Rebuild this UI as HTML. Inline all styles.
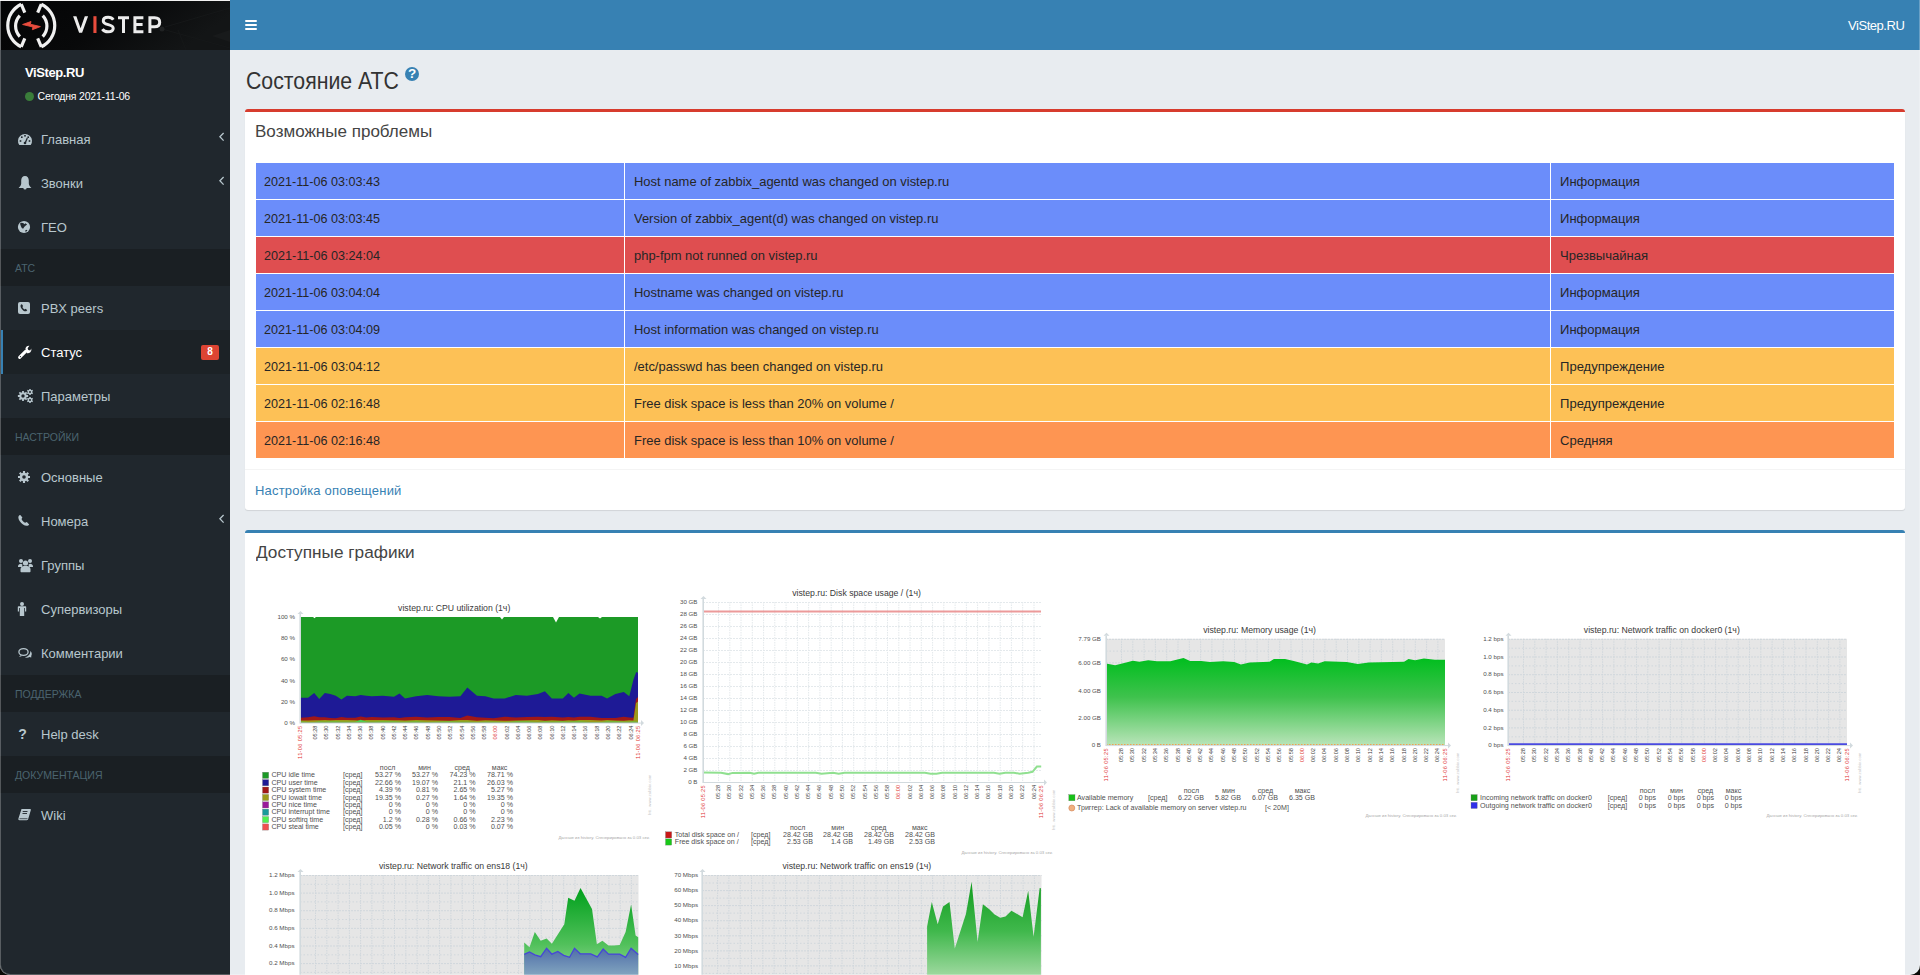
<!DOCTYPE html><html><head><meta charset="utf-8"><style>
*{box-sizing:border-box}
html,body{margin:0;padding:0}
body{width:1920px;height:975px;overflow:hidden;position:relative;background:#0b0b08;font-family:"Liberation Sans",sans-serif;color:#333}
.a{position:absolute;white-space:nowrap;line-height:1}
.mi{color:#b8c7ce;font-size:13px}
.hd{position:absolute;left:0;width:230px;height:37px;background:#1a1f23}
.hdt{color:#4b646f;font-size:10.5px;left:15px}
.row{position:absolute;height:36px}
.tt{font-size:12.6px;color:#262626}
</style></head><body>
<div class="a" style="left:0;top:0;width:1920px;height:975px;overflow:hidden;border-radius:0 0 10px 10px;background:#e8ecf0">
<div class="a" style="left:0;top:0;width:230px;height:975px;background:#20272d;"></div>
<div class="a" style="left:0;top:0;width:230px;height:1px;background:#f2f2f2"></div>
<div class="a" style="left:230px;top:0;width:1690px;height:50px;background:#3781b3"></div>
<svg class="a" style="left:0;top:1px" width="230" height="49" viewBox="0 1 230 49">
<defs><linearGradient id="lg" x1="0" y1="0" x2="1" y2="0.3">
<stop offset="0" stop-color="#030405"/><stop offset="0.55" stop-color="#08090a"/><stop offset="1" stop-color="#131516"/></linearGradient></defs>
<rect x="0" y="1" width="230" height="49" fill="url(#lg)"/>
<g stroke="#161819" stroke-width="1" fill="none"><path d="M162,29 L230,48 M165,27 L230,8 M178,30 L186,50"/></g><circle cx="162" cy="29" r="2.5" fill="#202223"/><path d="M212,36 L230,30 L230,42 Z" fill="#181a1b"/>
<rect x="0" y="1" width="1" height="49" fill="#3a3d40"/>
<g fill="none" stroke="#f0f0f0" stroke-width="3.2" stroke-linecap="butt">
<path d="M21.2,4.2 A23.6,23.6 0 0 0 21.2,46.8"/>
<path d="M21.2,4.2 L24.8,12.6"/>
<path d="M21.2,46.8 L24.8,38.4"/>
<path d="M41.3,4.2 A23.6,23.6 0 0 1 41.3,46.8"/>
<path d="M41.3,4.2 L37.7,12.6"/>
<path d="M41.3,46.8 L37.7,38.4"/>
<path d="M19.8,15.6 A15.2,15.2 0 0 0 19.8,36.6"/>
<path d="M42.7,15.6 A15.2,15.2 0 0 1 42.7,36.6"/>
</g>
<path d="M22.6,24.5 L31,21.5 L30.3,24.2 L40.4,26.6 L32.4,29.7 L32.9,27 Z" fill="#e84c3d" stroke="#e84c3d" stroke-width="0.9" stroke-linejoin="round"/>
<g fill="none" stroke="#ececec" stroke-width="3">

<path d="M113.3,19.8 C112.2,18.1 110.5,17.3 108.1,17.3 C105,17.3 103.3,18.9 103.3,20.9 C103.3,25.6 113.2,23.6 113.2,28.2 C113.2,30.5 111.2,31.8 108,31.8 C105.5,31.8 103.6,30.9 102.4,29.1"/>
<path d="M118,17.8 H129 M123.5,17.8 V33"/>
<path d="M143.4,17.8 H134.9 V31.7 H143.4 M134.9,24.6 H142.6"/>
<path d="M149.9,33 V17.8 H154.6 C158.1,17.8 159.7,19.8 159.7,22.3 C159.7,24.8 158.1,26.8 154.6,26.8 H149.9"/>
</g>
<rect x="93.4" y="16.2" width="3.1" height="16.8" fill="#e84c3d"/><path d="M73.1,16.3 L76.4,16.3 L80.6,28.2 L84.8,16.3 L88.1,16.3 L82.1,32.8 L79.1,32.8 Z" fill="#ececec"/>
</svg>
<div class="a" style="left:245px;top:20px;width:12px;height:2px;background:#fff;border-radius:1px"></div>
<div class="a" style="left:245px;top:24px;width:12px;height:2px;background:#fff;border-radius:1px"></div>
<div class="a" style="left:245px;top:28px;width:12px;height:2px;background:#fff;border-radius:1px"></div>
<div class="a" style="left:1848px;top:19px;font-size:13px;color:#fff;letter-spacing:-0.45px">ViStep.RU</div>
<div class="a" style="left:25px;top:66px;font-size:13px;font-weight:bold;color:#fff;letter-spacing:-0.4px">ViStep.RU</div>
<div class="a" style="left:25px;top:91.5px;width:9px;height:9px;border-radius:50%;background:#3a7d3a"></div>
<div class="a" style="left:37.5px;top:91.2px;font-size:10.5px;color:#fff;letter-spacing:-0.2px">Сегодня 2021-11-06</div>
<div class="a mi" style="left:41px;top:133px">Главная</div>
<svg class="a" style="left:218px;top:131.5px" width="8" height="10"><path d="M5.6,1 L1.9,4.8 L5.6,8.6" fill="none" stroke="#b8c7ce" stroke-width="1.3"/></svg>
<div class="a mi" style="left:41px;top:177px">Звонки</div>
<svg class="a" style="left:218px;top:175.5px" width="8" height="10"><path d="M5.6,1 L1.9,4.8 L5.6,8.6" fill="none" stroke="#b8c7ce" stroke-width="1.3"/></svg>
<div class="a mi" style="left:41px;top:221px">ГЕО</div>
<div class="hd" style="top:249px"></div>
<div class="a hdt" style="top:263px">АТС</div>
<div class="a mi" style="left:41px;top:302px">PBX peers</div>
<div class="a" style="left:0;top:330px;width:230px;height:44px;background:#1c2226"></div>
<div class="a" style="left:1px;top:330px;width:2px;height:44px;background:#3781b3"></div>
<div class="a mi" style="left:41px;top:346px;color:#fff">Статус</div>
<div class="a mi" style="left:41px;top:390px">Параметры</div>
<div class="hd" style="top:418px"></div>
<div class="a hdt" style="top:432px">НАСТРОЙКИ</div>
<div class="a mi" style="left:41px;top:471px">Основные</div>
<div class="a mi" style="left:41px;top:515px">Номера</div>
<svg class="a" style="left:218px;top:513.5px" width="8" height="10"><path d="M5.6,1 L1.9,4.8 L5.6,8.6" fill="none" stroke="#b8c7ce" stroke-width="1.3"/></svg>
<div class="a mi" style="left:41px;top:559px">Группы</div>
<div class="a mi" style="left:41px;top:603px">Супервизоры</div>
<div class="a mi" style="left:41px;top:647px">Комментарии</div>
<div class="hd" style="top:675px"></div>
<div class="a hdt" style="top:689px">ПОДДЕРЖКА</div>
<div class="a mi" style="left:41px;top:728px">Help desk</div>
<div class="hd" style="top:756px"></div>
<div class="a hdt" style="top:770px">ДОКУМЕНТАЦИЯ</div>
<div class="a mi" style="left:41px;top:809px">Wiki</div>
<div class="a" style="left:201px;top:345px;width:18px;height:15px;background:#dd4433;border-radius:2px"></div>
<div class="a" style="left:201px;top:347px;width:18px;text-align:center;font-size:10px;font-weight:bold;color:#fff">8</div>
<svg class="a" style="left:0;top:0" width="230" height="975" viewBox="0 0 230 975"><path d="M19.3,145 A7,7 0 1 1 30.7,145 Z" fill="#b8c7ce"/><rect x="19.7" y="140.2" width="1.6" height="1.6" fill="#20272d"/><rect x="21.0" y="136.39999999999998" width="1.6" height="1.6" fill="#20272d"/><rect x="24.2" y="135.0" width="1.6" height="1.6" fill="#20272d"/><rect x="27.4" y="136.39999999999998" width="1.6" height="1.6" fill="#20272d"/><rect x="28.7" y="140.2" width="1.6" height="1.6" fill="#20272d"/><path d="M25,143.5 L27.3,138" stroke="#20272d" stroke-width="1.3"/><circle cx="25" cy="143" r="1.3" fill="#20272d"/><path d="M25,176 C22.6,176 21.2,177.8 21.2,180.6 L21.2,183.6 C21.2,185.6 19.8,186.8 18.6,188 L31.4,188 C30.2,186.8 28.8,185.6 28.8,183.6 L28.8,180.6 C28.8,177.8 27.4,176 25,176 Z" fill="#b8c7ce"/><path d="M23.4,188 A1.6,1.6 0 0 0 26.6,188 Z" fill="#b8c7ce"/><circle cx="24" cy="227" r="6.1" fill="#b8c7ce"/><path d="M20,223.6 L21.3,222.8 L22.8,223.1 L23.9,223.6 L24.5,224.2 L25.4,223.2 L27.1,224.5 L25.5,225.8 L24.2,226.9 L23.1,228.8 L21.8,228 L20.9,226.3 Z M25.1,230.6 L26.8,229.7 L27.4,230.5 L25.8,231.9 Z" fill="#20272d"/><rect x="18" y="302" width="12" height="12" rx="2" fill="#b8c7ce"/><path d="M21.1,304.5 C20.2,305.2 20.3,307 21.6,308.8 C23,310.8 25,311.8 26.2,311.2 L27.3,310.2 L25.6,308.8 L24.6,309.5 C23.6,309 22.8,308 22.4,307 L23.1,306 L21.9,304.3 Z" fill="#20272d"/><path d="M19.6,357.4 L25.6,351.4" stroke="#fff" stroke-width="3" stroke-linecap="round"/><path d="M25.4,348.8 A3.8,3.8 0 0 1 29.4,345.8 L27.6,348.2 L28.3,349.9 L30.2,350.5 L31.3,348.6 A3.8,3.8 0 0 1 26.8,353.2 Z" fill="#fff"/><circle cx="20.4" cy="356.6" r="0.6" fill="#1e282c"/><polygon points="22.09,390.88 23.91,390.88 23.90,392.37 24.93,392.79 25.97,391.73 27.27,393.03 26.21,394.07 26.63,395.10 28.12,395.09 28.12,396.91 26.63,396.90 26.21,397.93 27.27,398.97 25.97,400.27 24.93,399.21 23.90,399.63 23.91,401.12 22.09,401.12 22.10,399.63 21.07,399.21 20.03,400.27 18.73,398.97 19.79,397.93 19.37,396.90 17.88,396.91 17.88,395.09 19.37,395.10 19.79,394.07 18.73,393.03 20.03,391.73 21.07,392.79 22.10,392.37" fill="#b8c7ce"/><circle cx="23" cy="396" r="1.7" fill="#20272d"/><polygon points="29.25,388.89 30.75,388.89 30.73,389.82 31.52,390.27 32.32,389.80 33.07,391.09 32.26,391.54 32.26,392.46 33.07,392.91 32.32,394.20 31.52,393.73 30.73,394.18 30.75,395.11 29.25,395.11 29.27,394.18 28.48,393.73 27.68,394.20 26.93,392.91 27.74,392.46 27.74,391.54 26.93,391.09 27.68,389.80 28.48,390.27 29.27,389.82" fill="#b8c7ce"/><circle cx="30" cy="392" r="1" fill="#20272d"/><polygon points="29.25,396.89 30.75,396.89 30.73,397.82 31.52,398.27 32.32,397.80 33.07,399.09 32.26,399.54 32.26,400.46 33.07,400.91 32.32,402.20 31.52,401.73 30.73,402.18 30.75,403.11 29.25,403.11 29.27,402.18 28.48,401.73 27.68,402.20 26.93,400.91 27.74,400.46 27.74,399.54 26.93,399.09 27.68,397.80 28.48,398.27 29.27,397.82" fill="#b8c7ce"/><circle cx="30" cy="400" r="1" fill="#20272d"/><polygon points="22.93,470.99 25.07,470.99 25.06,472.74 26.27,473.24 27.49,472.00 29.00,473.51 27.76,474.73 28.26,475.94 30.01,475.93 30.01,478.07 28.26,478.06 27.76,479.27 29.00,480.49 27.49,482.00 26.27,480.76 25.06,481.26 25.07,483.01 22.93,483.01 22.94,481.26 21.73,480.76 20.51,482.00 19.00,480.49 20.24,479.27 19.74,478.06 17.99,478.07 17.99,475.93 19.74,475.94 20.24,474.73 19.00,473.51 20.51,472.00 21.73,473.24 22.94,472.74" fill="#b8c7ce"/><circle cx="24" cy="477" r="1.8" fill="#20272d"/><path d="M19.3,515.2 C18,516.3 18,518.5 19.6,520.9 C21.6,523.8 24.6,525.9 26.7,525.8 C27.8,525.7 28.8,525.2 29.2,524.4 L26.8,522 L25.2,522.8 C23.6,522.1 22.2,520.6 21.5,519 L22.4,517.6 L20.3,514.9 Z" fill="#b8c7ce"/><circle cx="21" cy="561" r="2" fill="#b8c7ce"/><circle cx="30" cy="561" r="2" fill="#b8c7ce"/><circle cx="25.5" cy="563" r="2.6" fill="#b8c7ce"/><path d="M18,566.5 C18,564.8 19.5,563.8 21,563.8 L22.5,564.5 L22,567 L18,567 Z M33,566.5 C33,564.8 31.5,563.8 30,563.8 L28.5,564.5 L29,567 L33,567 Z" fill="#b8c7ce"/><path d="M20.5,571.5 L20.5,569.5 C20.5,567.3 22,566 24,566 L27,566 C29,566 30.5,567.3 30.5,569.5 L30.5,571.5 C30.5,572 30,572.2 29.5,572.2 L21.5,572.2 C21,572.2 20.5,572 20.5,571.5 Z" fill="#b8c7ce"/><circle cx="22" cy="603.9" r="2" fill="#b8c7ce"/><path d="M18.8,606.3 L25.2,606.3 C25.8,606.3 26.2,606.7 26.2,607.3 L26.2,611.5 L25,611.5 L25,608 L24.2,608 L24.2,616 L19.8,616 L19.8,608 L19,608 L19,611.5 L17.8,611.5 L17.8,607.3 C17.8,606.7 18.2,606.3 18.8,606.3 Z" fill="#b8c7ce"/><ellipse cx="23.5" cy="652" rx="4.6" ry="3.4" fill="none" stroke="#b8c7ce" stroke-width="1.3"/><path d="M19,657 L20.5,655.2 L22,656 Z" fill="#b8c7ce"/><path d="M30.3,651 C31.8,652 32.2,654 31.3,655.8 L31.2,657.5 L29.5,657 C28.5,657.7 26.5,658 24.8,657.3 C27.8,657 30.5,654.5 30.3,651 Z" fill="#b8c7ce"/><text x="18.3" y="739.4" font-family="Liberation Sans" font-weight="bold" font-size="14" fill="#b8c7ce">?</text><path d="M21.5,809 L30,809 C30.8,809 31,809.6 30.8,810.3 L28.2,819 C28,819.8 27.5,820.2 26.7,820.2 L19.5,820.2 C18.4,820.2 18.2,819.2 18.5,818.2 Z" fill="#b8c7ce"/><path d="M22.7,811.5 L27.5,811.5 M22.5,813.5 L27,813.5" stroke="#20272d" stroke-width="0.9"/><path d="M19.5,818.7 L27.5,818.7" stroke="#20272d" stroke-width="0.7"/></svg>
<div class="a" style="left:246px;top:70.06px;font-size:23.3px;color:#333;transform:scaleX(0.913);transform-origin:0 0">Состояние АТС</div>
<div class="a" style="left:405px;top:67px;width:14px;height:14px;border-radius:50%;background:#3781b3"></div>
<div class="a" style="left:405px;top:67.3px;width:14px;text-align:center;font-size:13.5px;font-weight:bold;color:#fff">?</div>
<div class="a" style="left:245px;top:109px;width:1660px;height:401px;background:#fff;border-top:3px solid #d73c2e;border-radius:3px;box-shadow:0 1px 1px rgba(0,0,0,0.1)"></div>
<div class="a" style="left:255px;top:124.1px;font-size:16.8px;color:#444;transform:scaleX(1.015);transform-origin:0 0">Возможные проблемы</div>
<div class="a" style="left:256px;top:163px;width:368px;height:36px;background:#6b8dfa"></div>
<div class="a" style="left:625px;top:163px;width:925px;height:36px;background:#6b8dfa"></div>
<div class="a" style="left:1551px;top:163px;width:343px;height:36px;background:#6b8dfa"></div>
<div class="a tt" style="left:264px;top:176px">2021-11-06 03:03:43</div>
<div class="a tt" style="left:633.5px;top:176px;transform:scaleX(1.028);transform-origin:0 0">Host name of zabbix_agentd was changed on vistep.ru</div>
<div class="a tt" style="left:1559.5px;top:176px;transform:scaleX(1.036);transform-origin:0 0">Информация</div>
<div class="a" style="left:256px;top:200px;width:368px;height:36px;background:#6b8dfa"></div>
<div class="a" style="left:625px;top:200px;width:925px;height:36px;background:#6b8dfa"></div>
<div class="a" style="left:1551px;top:200px;width:343px;height:36px;background:#6b8dfa"></div>
<div class="a tt" style="left:264px;top:213px">2021-11-06 03:03:45</div>
<div class="a tt" style="left:633.5px;top:213px;transform:scaleX(1.028);transform-origin:0 0">Version of zabbix_agent(d) was changed on vistep.ru</div>
<div class="a tt" style="left:1559.5px;top:213px;transform:scaleX(1.036);transform-origin:0 0">Информация</div>
<div class="a" style="left:256px;top:237px;width:368px;height:36px;background:#df4e50"></div>
<div class="a" style="left:625px;top:237px;width:925px;height:36px;background:#df4e50"></div>
<div class="a" style="left:1551px;top:237px;width:343px;height:36px;background:#df4e50"></div>
<div class="a tt" style="left:264px;top:250px">2021-11-06 03:24:04</div>
<div class="a tt" style="left:633.5px;top:250px;transform:scaleX(1.028);transform-origin:0 0">php-fpm not runned on vistep.ru</div>
<div class="a tt" style="left:1559.5px;top:250px;transform:scaleX(1.036);transform-origin:0 0">Чрезвычайная</div>
<div class="a" style="left:256px;top:274px;width:368px;height:36px;background:#6b8dfa"></div>
<div class="a" style="left:625px;top:274px;width:925px;height:36px;background:#6b8dfa"></div>
<div class="a" style="left:1551px;top:274px;width:343px;height:36px;background:#6b8dfa"></div>
<div class="a tt" style="left:264px;top:287px">2021-11-06 03:04:04</div>
<div class="a tt" style="left:633.5px;top:287px;transform:scaleX(1.028);transform-origin:0 0">Hostname was changed on vistep.ru</div>
<div class="a tt" style="left:1559.5px;top:287px;transform:scaleX(1.036);transform-origin:0 0">Информация</div>
<div class="a" style="left:256px;top:311px;width:368px;height:36px;background:#6b8dfa"></div>
<div class="a" style="left:625px;top:311px;width:925px;height:36px;background:#6b8dfa"></div>
<div class="a" style="left:1551px;top:311px;width:343px;height:36px;background:#6b8dfa"></div>
<div class="a tt" style="left:264px;top:324px">2021-11-06 03:04:09</div>
<div class="a tt" style="left:633.5px;top:324px;transform:scaleX(1.028);transform-origin:0 0">Host information was changed on vistep.ru</div>
<div class="a tt" style="left:1559.5px;top:324px;transform:scaleX(1.036);transform-origin:0 0">Информация</div>
<div class="a" style="left:256px;top:348px;width:368px;height:36px;background:#fdc156"></div>
<div class="a" style="left:625px;top:348px;width:925px;height:36px;background:#fdc156"></div>
<div class="a" style="left:1551px;top:348px;width:343px;height:36px;background:#fdc156"></div>
<div class="a tt" style="left:264px;top:361px">2021-11-06 03:04:12</div>
<div class="a tt" style="left:633.5px;top:361px;transform:scaleX(1.028);transform-origin:0 0">/etc/passwd has been changed on vistep.ru</div>
<div class="a tt" style="left:1559.5px;top:361px;transform:scaleX(1.036);transform-origin:0 0">Предупреждение</div>
<div class="a" style="left:256px;top:385px;width:368px;height:36px;background:#fdc156"></div>
<div class="a" style="left:625px;top:385px;width:925px;height:36px;background:#fdc156"></div>
<div class="a" style="left:1551px;top:385px;width:343px;height:36px;background:#fdc156"></div>
<div class="a tt" style="left:264px;top:398px">2021-11-06 02:16:48</div>
<div class="a tt" style="left:633.5px;top:398px;transform:scaleX(1.028);transform-origin:0 0">Free disk space is less than 20% on volume /</div>
<div class="a tt" style="left:1559.5px;top:398px;transform:scaleX(1.036);transform-origin:0 0">Предупреждение</div>
<div class="a" style="left:256px;top:422px;width:368px;height:36px;background:#fe9552"></div>
<div class="a" style="left:625px;top:422px;width:925px;height:36px;background:#fe9552"></div>
<div class="a" style="left:1551px;top:422px;width:343px;height:36px;background:#fe9552"></div>
<div class="a tt" style="left:264px;top:435px">2021-11-06 02:16:48</div>
<div class="a tt" style="left:633.5px;top:435px;transform:scaleX(1.028);transform-origin:0 0">Free disk space is less than 10% on volume /</div>
<div class="a tt" style="left:1559.5px;top:435px;transform:scaleX(1.036);transform-origin:0 0">Средняя</div>
<div class="a" style="left:245px;top:469px;width:1660px;height:1px;background:#f4f4f4"></div>
<div class="a" style="left:255px;top:484.2px;font-size:13px;color:#3781b3;letter-spacing:0.2px">Настройка оповещений</div>
<div class="a" style="left:245px;top:530px;width:1660px;height:460px;background:#fff;border-top:3px solid #3781b3;border-radius:3px"></div>
<div class="a" style="left:255.5px;top:544.7px;font-size:16.8px;color:#444;transform:scaleX(1.026);transform-origin:0 0">Доступные графики</div>
<svg class="a" style="left:0;top:0" width="1920" height="975" viewBox="0 0 1920 975" font-family="Liberation Sans"><defs>
<linearGradient id="gMem" x1="0" y1="0" x2="0" y2="1"><stop offset="0" stop-color="#00be1e"/><stop offset="0.45" stop-color="#3fc24d"/><stop offset="1" stop-color="#b8e4b8"/></linearGradient>
<linearGradient id="gNet" x1="0" y1="0" x2="0" y2="1"><stop offset="0" stop-color="#00a01c"/><stop offset="0.6" stop-color="#50c05a"/><stop offset="1" stop-color="#a0dca0"/></linearGradient>
<linearGradient id="gNet2" x1="0" y1="0" x2="0" y2="1"><stop offset="0" stop-color="#109c1e"/><stop offset="0.5" stop-color="#40b84c"/><stop offset="1" stop-color="#a8dca8"/></linearGradient>
<linearGradient id="gOut" x1="0" y1="0" x2="0" y2="1"><stop offset="0" stop-color="#4f6ea8"/><stop offset="1" stop-color="#8cb0c4"/></linearGradient>
</defs><text x="454.2" y="610.8" font-size="8.7" fill="#3a3a3a" text-anchor="middle">vistep.ru: CPU utilization (1ч)</text><rect x="300" y="617" width="338" height="105.60000000000002" fill="#ffffff"/><line x1="315.5" y1="617" x2="315.5" y2="722.6" stroke="#e8ecee" stroke-width="1" stroke-dasharray="1.5 1"/><line x1="326.8" y1="617" x2="326.8" y2="722.6" stroke="#e8ecee" stroke-width="1" stroke-dasharray="1.5 1"/><line x1="338.0" y1="617" x2="338.0" y2="722.6" stroke="#e8ecee" stroke-width="1" stroke-dasharray="1.5 1"/><line x1="349.3" y1="617" x2="349.3" y2="722.6" stroke="#e8ecee" stroke-width="1" stroke-dasharray="1.5 1"/><line x1="360.6" y1="617" x2="360.6" y2="722.6" stroke="#e8ecee" stroke-width="1" stroke-dasharray="1.5 1"/><line x1="371.8" y1="617" x2="371.8" y2="722.6" stroke="#e8ecee" stroke-width="1" stroke-dasharray="1.5 1"/><line x1="383.1" y1="617" x2="383.1" y2="722.6" stroke="#e8ecee" stroke-width="1" stroke-dasharray="1.5 1"/><line x1="394.4" y1="617" x2="394.4" y2="722.6" stroke="#e8ecee" stroke-width="1" stroke-dasharray="1.5 1"/><line x1="405.6" y1="617" x2="405.6" y2="722.6" stroke="#e8ecee" stroke-width="1" stroke-dasharray="1.5 1"/><line x1="416.9" y1="617" x2="416.9" y2="722.6" stroke="#e8ecee" stroke-width="1" stroke-dasharray="1.5 1"/><line x1="428.2" y1="617" x2="428.2" y2="722.6" stroke="#e8ecee" stroke-width="1" stroke-dasharray="1.5 1"/><line x1="439.4" y1="617" x2="439.4" y2="722.6" stroke="#e8ecee" stroke-width="1" stroke-dasharray="1.5 1"/><line x1="450.7" y1="617" x2="450.7" y2="722.6" stroke="#e8ecee" stroke-width="1" stroke-dasharray="1.5 1"/><line x1="462.0" y1="617" x2="462.0" y2="722.6" stroke="#e8ecee" stroke-width="1" stroke-dasharray="1.5 1"/><line x1="473.2" y1="617" x2="473.2" y2="722.6" stroke="#e8ecee" stroke-width="1" stroke-dasharray="1.5 1"/><line x1="484.5" y1="617" x2="484.5" y2="722.6" stroke="#e8ecee" stroke-width="1" stroke-dasharray="1.5 1"/><line x1="495.8" y1="617" x2="495.8" y2="722.6" stroke="#e8ecee" stroke-width="1" stroke-dasharray="1.5 1"/><line x1="507.0" y1="617" x2="507.0" y2="722.6" stroke="#e8ecee" stroke-width="1" stroke-dasharray="1.5 1"/><line x1="518.3" y1="617" x2="518.3" y2="722.6" stroke="#e8ecee" stroke-width="1" stroke-dasharray="1.5 1"/><line x1="529.6" y1="617" x2="529.6" y2="722.6" stroke="#e8ecee" stroke-width="1" stroke-dasharray="1.5 1"/><line x1="540.8" y1="617" x2="540.8" y2="722.6" stroke="#e8ecee" stroke-width="1" stroke-dasharray="1.5 1"/><line x1="552.1" y1="617" x2="552.1" y2="722.6" stroke="#e8ecee" stroke-width="1" stroke-dasharray="1.5 1"/><line x1="563.4" y1="617" x2="563.4" y2="722.6" stroke="#e8ecee" stroke-width="1" stroke-dasharray="1.5 1"/><line x1="574.6" y1="617" x2="574.6" y2="722.6" stroke="#e8ecee" stroke-width="1" stroke-dasharray="1.5 1"/><line x1="585.9" y1="617" x2="585.9" y2="722.6" stroke="#e8ecee" stroke-width="1" stroke-dasharray="1.5 1"/><line x1="597.2" y1="617" x2="597.2" y2="722.6" stroke="#e8ecee" stroke-width="1" stroke-dasharray="1.5 1"/><line x1="608.4" y1="617" x2="608.4" y2="722.6" stroke="#e8ecee" stroke-width="1" stroke-dasharray="1.5 1"/><line x1="619.7" y1="617" x2="619.7" y2="722.6" stroke="#e8ecee" stroke-width="1" stroke-dasharray="1.5 1"/><line x1="631.0" y1="617" x2="631.0" y2="722.6" stroke="#e8ecee" stroke-width="1" stroke-dasharray="1.5 1"/><path d="M300.0,617.0 L313.0,617.0 L314.5,618.2 L316.0,617.0 L500.0,617.0 L502.0,619.4 L504.0,617.0 L553.0,617.0 L556.0,622.5 L559.0,617.0 L598.0,617.0 L600.0,618.6 L602.0,617.0 L638.0,617.0 L638.0,722.6 L300.0,722.6 Z" fill="#1c9a26"/><path d="M300.0,697.7 L308.1,697.7 L314.2,693.0 L319.2,699.0 L324.8,693.0 L330.3,694.1 L335.8,695.7 L341.4,699.6 L346.9,695.7 L355.2,696.3 L360.7,694.9 L366.3,695.7 L371.8,696.3 L382.9,695.7 L394.0,696.8 L399.5,693.5 L405.0,698.5 L416.1,696.3 L427.2,694.9 L438.3,696.3 L449.3,696.8 L460.4,696.3 L467.3,687.4 L477.0,695.7 L485.3,696.3 L493.6,698.5 L504.7,698.5 L515.8,694.9 L526.9,695.7 L537.9,694.1 L544.9,691.3 L551.8,698.5 L562.8,698.5 L568.4,693.0 L573.9,697.7 L579.5,693.5 L590.5,695.7 L601.6,695.7 L607.1,698.5 L615.4,694.1 L623.8,692.1 L629.3,696.3 L633.4,679.7 L636.2,671.9 L638.0,672.7 L638.0,722.6 L300.0,722.6 Z" fill="#1e1a96"/><path d="M300.0,717.8 L308.1,717.3 L314.2,716.2 L319.2,717.2 L324.8,717.2 L330.3,718.1 L335.8,718.2 L341.4,716.9 L346.9,717.8 L355.2,717.8 L360.7,716.6 L366.3,717.4 L371.8,716.9 L382.9,717.4 L394.0,717.2 L399.5,718.0 L405.0,717.2 L416.1,716.8 L427.2,717.4 L438.3,717.0 L449.3,717.1 L460.4,718.1 L467.3,715.5 L477.0,717.3 L485.3,717.7 L493.6,718.2 L504.7,716.8 L515.8,717.4 L526.9,717.0 L537.9,716.8 L544.9,717.1 L551.8,716.7 L562.8,717.6 L568.4,716.9 L573.9,717.5 L579.5,716.7 L590.5,716.8 L601.6,718.0 L607.1,718.0 L615.4,717.9 L623.8,716.7 L629.3,717.5 L633.4,717.8 L636.0,699.0 L638.0,697.0 L638.0,722.6 L300.0,722.6 Z" fill="#a01818"/><path d="M300.0,720.5 L308.1,720.5 L314.2,720.3 L319.2,720.3 L324.8,720.1 L330.3,720.3 L335.8,720.1 L341.4,720.1 L346.9,720.0 L355.2,720.3 L360.7,720.7 L366.3,720.1 L371.8,720.0 L382.9,720.1 L394.0,720.3 L399.5,720.2 L405.0,720.6 L416.1,720.1 L427.2,720.3 L438.3,720.6 L449.3,720.7 L460.4,720.1 L467.3,720.0 L477.0,720.7 L485.3,720.2 L493.6,720.5 L504.7,720.7 L515.8,720.6 L526.9,720.2 L537.9,720.1 L544.9,720.8 L551.8,720.3 L562.8,720.8 L568.4,720.2 L573.9,720.5 L579.5,720.1 L590.5,720.0 L601.6,720.4 L607.1,720.0 L615.4,720.6 L623.8,720.7 L629.3,720.3 L633.4,720.5 L636.0,703.0 L638.0,701.5 L638.0,722.6 L300.0,722.6 Z" fill="#9c9a1a"/><path d="M300.0,721.6 L308.1,721.9 L314.2,722.0 L319.2,721.5 L324.8,721.8 L330.3,721.4 L335.8,721.5 L341.4,721.8 L346.9,721.7 L355.2,721.7 L360.7,719.8 L366.3,721.6 L371.8,721.7 L382.9,721.6 L394.0,721.4 L399.5,721.7 L405.0,721.7 L416.1,721.6 L427.2,721.9 L438.3,721.8 L449.3,721.4 L460.4,721.7 L467.3,721.7 L477.0,722.0 L485.3,721.8 L493.6,721.7 L504.7,722.0 L515.8,721.6 L526.9,721.6 L537.9,722.0 L544.9,721.6 L551.8,721.7 L562.8,721.6 L568.4,721.8 L573.9,721.6 L579.5,721.6 L590.5,722.0 L601.6,722.0 L607.1,721.6 L615.4,721.4 L623.8,721.8 L629.3,721.7 L633.4,721.6 L636.2,721.8 L638.0,721.8 L638.0,722.6 L300.0,722.6 Z" fill="#50d050"/><line x1="300.2" y1="614" x2="300.2" y2="723.6" stroke="#d2dade" stroke-width="1.6"/><line x1="300" y1="723.1" x2="641" y2="723.1" stroke="#d2dade" stroke-width="1"/><path d="M297.5,614 L300.5,611 L303.5,614 Z" fill="#d2dade"/><path d="M641,720.1 L644,723.1 L641,726.1 Z" fill="#d2dade"/><text x="295" y="619.2" font-size="6.2" fill="#505050" text-anchor="end">100 %</text><text x="295" y="640.3" font-size="6.2" fill="#505050" text-anchor="end">80 %</text><text x="295" y="661.4" font-size="6.2" fill="#505050" text-anchor="end">60 %</text><text x="295" y="682.6" font-size="6.2" fill="#505050" text-anchor="end">40 %</text><text x="295" y="703.7" font-size="6.2" fill="#505050" text-anchor="end">20 %</text><text x="295" y="724.8" font-size="6.2" fill="#505050" text-anchor="end">0 %</text><text transform="translate(302.0,725.6) rotate(-90)" font-size="5.6" fill="#e03030" text-anchor="end" letter-spacing="0.35">11-06 05:25</text><text transform="translate(640.0,725.6) rotate(-90)" font-size="5.6" fill="#e03030" text-anchor="end" letter-spacing="0.35">11-06 06:25</text><text transform="translate(317.0,725.6) rotate(-90)" font-size="5.6" fill="#3a3a3a" text-anchor="end" letter-spacing="0">05:28</text><text transform="translate(328.3,725.6) rotate(-90)" font-size="5.6" fill="#3a3a3a" text-anchor="end" letter-spacing="0">05:30</text><text transform="translate(339.5,725.6) rotate(-90)" font-size="5.6" fill="#3a3a3a" text-anchor="end" letter-spacing="0">05:32</text><text transform="translate(350.8,725.6) rotate(-90)" font-size="5.6" fill="#3a3a3a" text-anchor="end" letter-spacing="0">05:34</text><text transform="translate(362.1,725.6) rotate(-90)" font-size="5.6" fill="#3a3a3a" text-anchor="end" letter-spacing="0">05:36</text><text transform="translate(373.3,725.6) rotate(-90)" font-size="5.6" fill="#3a3a3a" text-anchor="end" letter-spacing="0">05:38</text><text transform="translate(384.6,725.6) rotate(-90)" font-size="5.6" fill="#3a3a3a" text-anchor="end" letter-spacing="0">05:40</text><text transform="translate(395.9,725.6) rotate(-90)" font-size="5.6" fill="#3a3a3a" text-anchor="end" letter-spacing="0">05:42</text><text transform="translate(407.1,725.6) rotate(-90)" font-size="5.6" fill="#3a3a3a" text-anchor="end" letter-spacing="0">05:44</text><text transform="translate(418.4,725.6) rotate(-90)" font-size="5.6" fill="#3a3a3a" text-anchor="end" letter-spacing="0">05:46</text><text transform="translate(429.7,725.6) rotate(-90)" font-size="5.6" fill="#3a3a3a" text-anchor="end" letter-spacing="0">05:48</text><text transform="translate(440.9,725.6) rotate(-90)" font-size="5.6" fill="#3a3a3a" text-anchor="end" letter-spacing="0">05:50</text><text transform="translate(452.2,725.6) rotate(-90)" font-size="5.6" fill="#3a3a3a" text-anchor="end" letter-spacing="0">05:52</text><text transform="translate(463.5,725.6) rotate(-90)" font-size="5.6" fill="#3a3a3a" text-anchor="end" letter-spacing="0">05:54</text><text transform="translate(474.7,725.6) rotate(-90)" font-size="5.6" fill="#3a3a3a" text-anchor="end" letter-spacing="0">05:56</text><text transform="translate(486.0,725.6) rotate(-90)" font-size="5.6" fill="#3a3a3a" text-anchor="end" letter-spacing="0">05:58</text><text transform="translate(497.3,725.6) rotate(-90)" font-size="5.6" fill="#e03030" text-anchor="end" letter-spacing="0">06:00</text><text transform="translate(508.5,725.6) rotate(-90)" font-size="5.6" fill="#3a3a3a" text-anchor="end" letter-spacing="0">06:02</text><text transform="translate(519.8,725.6) rotate(-90)" font-size="5.6" fill="#3a3a3a" text-anchor="end" letter-spacing="0">06:04</text><text transform="translate(531.1,725.6) rotate(-90)" font-size="5.6" fill="#3a3a3a" text-anchor="end" letter-spacing="0">06:06</text><text transform="translate(542.3,725.6) rotate(-90)" font-size="5.6" fill="#3a3a3a" text-anchor="end" letter-spacing="0">06:08</text><text transform="translate(553.6,725.6) rotate(-90)" font-size="5.6" fill="#3a3a3a" text-anchor="end" letter-spacing="0">06:10</text><text transform="translate(564.9,725.6) rotate(-90)" font-size="5.6" fill="#3a3a3a" text-anchor="end" letter-spacing="0">06:12</text><text transform="translate(576.1,725.6) rotate(-90)" font-size="5.6" fill="#3a3a3a" text-anchor="end" letter-spacing="0">06:14</text><text transform="translate(587.4,725.6) rotate(-90)" font-size="5.6" fill="#3a3a3a" text-anchor="end" letter-spacing="0">06:16</text><text transform="translate(598.7,725.6) rotate(-90)" font-size="5.6" fill="#3a3a3a" text-anchor="end" letter-spacing="0">06:18</text><text transform="translate(609.9,725.6) rotate(-90)" font-size="5.6" fill="#3a3a3a" text-anchor="end" letter-spacing="0">06:20</text><text transform="translate(621.2,725.6) rotate(-90)" font-size="5.6" fill="#3a3a3a" text-anchor="end" letter-spacing="0">06:22</text><text transform="translate(632.5,725.6) rotate(-90)" font-size="5.6" fill="#3a3a3a" text-anchor="end" letter-spacing="0">06:24</text><text x="387.6" y="769.9000000000001" font-size="7.1" fill="#505050" text-anchor="middle">посл</text><text x="424.6" y="769.9000000000001" font-size="7.1" fill="#505050" text-anchor="middle">мин</text><text x="462.20000000000005" y="769.9000000000001" font-size="7.1" fill="#505050" text-anchor="middle">сред</text><text x="499.6" y="769.9000000000001" font-size="7.1" fill="#505050" text-anchor="middle">макс</text><rect x="262.5" y="772.2" width="6.2" height="6.2" fill="#1c9a26" stroke="#777" stroke-width="0.3"/><text x="271.5" y="777.4000000000001" font-size="7.1" fill="#505050">CPU idle time</text><text x="343" y="777.4000000000001" font-size="7.1" fill="#505050">[сред]</text><text x="401" y="777.4000000000001" font-size="7.1" fill="#505050" text-anchor="end">53.27 %</text><text x="438" y="777.4000000000001" font-size="7.1" fill="#505050" text-anchor="end">53.27 %</text><text x="475.6" y="777.4000000000001" font-size="7.1" fill="#505050" text-anchor="end">74.23 %</text><text x="513" y="777.4000000000001" font-size="7.1" fill="#505050" text-anchor="end">78.71 %</text><rect x="262.5" y="779.6" width="6.2" height="6.2" fill="#1e1a96" stroke="#777" stroke-width="0.3"/><text x="271.5" y="784.8000000000001" font-size="7.1" fill="#505050">CPU user time</text><text x="343" y="784.8000000000001" font-size="7.1" fill="#505050">[сред]</text><text x="401" y="784.8000000000001" font-size="7.1" fill="#505050" text-anchor="end">22.66 %</text><text x="438" y="784.8000000000001" font-size="7.1" fill="#505050" text-anchor="end">19.07 %</text><text x="475.6" y="784.8000000000001" font-size="7.1" fill="#505050" text-anchor="end">21.1 %</text><text x="513" y="784.8000000000001" font-size="7.1" fill="#505050" text-anchor="end">26.03 %</text><rect x="262.5" y="787.0" width="6.2" height="6.2" fill="#a01818" stroke="#777" stroke-width="0.3"/><text x="271.5" y="792.2" font-size="7.1" fill="#505050">CPU system time</text><text x="343" y="792.2" font-size="7.1" fill="#505050">[сред]</text><text x="401" y="792.2" font-size="7.1" fill="#505050" text-anchor="end">4.39 %</text><text x="438" y="792.2" font-size="7.1" fill="#505050" text-anchor="end">0.81 %</text><text x="475.6" y="792.2" font-size="7.1" fill="#505050" text-anchor="end">2.65 %</text><text x="513" y="792.2" font-size="7.1" fill="#505050" text-anchor="end">5.27 %</text><rect x="262.5" y="794.4" width="6.2" height="6.2" fill="#9c9a1a" stroke="#777" stroke-width="0.3"/><text x="271.5" y="799.6" font-size="7.1" fill="#505050">CPU iowait time</text><text x="343" y="799.6" font-size="7.1" fill="#505050">[сред]</text><text x="401" y="799.6" font-size="7.1" fill="#505050" text-anchor="end">19.35 %</text><text x="438" y="799.6" font-size="7.1" fill="#505050" text-anchor="end">0.27 %</text><text x="475.6" y="799.6" font-size="7.1" fill="#505050" text-anchor="end">1.64 %</text><text x="513" y="799.6" font-size="7.1" fill="#505050" text-anchor="end">19.35 %</text><rect x="262.5" y="801.8" width="6.2" height="6.2" fill="#9a1a9a" stroke="#777" stroke-width="0.3"/><text x="271.5" y="807.0" font-size="7.1" fill="#505050">CPU nice time</text><text x="343" y="807.0" font-size="7.1" fill="#505050">[сред]</text><text x="401" y="807.0" font-size="7.1" fill="#505050" text-anchor="end">0 %</text><text x="438" y="807.0" font-size="7.1" fill="#505050" text-anchor="end">0 %</text><text x="475.6" y="807.0" font-size="7.1" fill="#505050" text-anchor="end">0 %</text><text x="513" y="807.0" font-size="7.1" fill="#505050" text-anchor="end">0 %</text><rect x="262.5" y="809.1" width="6.2" height="6.2" fill="#1a9a9a" stroke="#777" stroke-width="0.3"/><text x="271.5" y="814.3000000000001" font-size="7.1" fill="#505050">CPU interrupt time</text><text x="343" y="814.3000000000001" font-size="7.1" fill="#505050">[сред]</text><text x="401" y="814.3000000000001" font-size="7.1" fill="#505050" text-anchor="end">0 %</text><text x="438" y="814.3000000000001" font-size="7.1" fill="#505050" text-anchor="end">0 %</text><text x="475.6" y="814.3000000000001" font-size="7.1" fill="#505050" text-anchor="end">0 %</text><text x="513" y="814.3000000000001" font-size="7.1" fill="#505050" text-anchor="end">0 %</text><rect x="262.5" y="816.5" width="6.2" height="6.2" fill="#50f050" stroke="#777" stroke-width="0.3"/><text x="271.5" y="821.7" font-size="7.1" fill="#505050">CPU softirq time</text><text x="343" y="821.7" font-size="7.1" fill="#505050">[сред]</text><text x="401" y="821.7" font-size="7.1" fill="#505050" text-anchor="end">1.2 %</text><text x="438" y="821.7" font-size="7.1" fill="#505050" text-anchor="end">0.28 %</text><text x="475.6" y="821.7" font-size="7.1" fill="#505050" text-anchor="end">0.66 %</text><text x="513" y="821.7" font-size="7.1" fill="#505050" text-anchor="end">2.23 %</text><rect x="262.5" y="823.9" width="6.2" height="6.2" fill="#f05050" stroke="#777" stroke-width="0.3"/><text x="271.5" y="829.1" font-size="7.1" fill="#505050">CPU steal time</text><text x="343" y="829.1" font-size="7.1" fill="#505050">[сред]</text><text x="401" y="829.1" font-size="7.1" fill="#505050" text-anchor="end">0.05 %</text><text x="438" y="829.1" font-size="7.1" fill="#505050" text-anchor="end">0 %</text><text x="475.6" y="829.1" font-size="7.1" fill="#505050" text-anchor="end">0.03 %</text><text x="513" y="829.1" font-size="7.1" fill="#505050" text-anchor="end">0.07 %</text><text x="650" y="838.5" font-size="4.3" fill="#a8a8a8" text-anchor="end">Данные из history. Сгенерировано за 0.03 сек.</text><text transform="translate(651,815) rotate(-90)" font-size="4.3" fill="#c8c8c8">htt.. www.zabbix.com</text><text x="856.5" y="596" font-size="8.7" fill="#3a3a3a" text-anchor="middle">vistep.ru: Disk space usage / (1ч)</text><rect x="703" y="602" width="338" height="180" fill="#ffffff"/><line x1="703" y1="602.5" x2="1041" y2="602.5" stroke="#e4e9ec" stroke-width="1" stroke-dasharray="2 1"/><line x1="703" y1="614.5" x2="1041" y2="614.5" stroke="#e4e9ec" stroke-width="1" stroke-dasharray="2 1"/><line x1="703" y1="626.5" x2="1041" y2="626.5" stroke="#e4e9ec" stroke-width="1" stroke-dasharray="2 1"/><line x1="703" y1="638.5" x2="1041" y2="638.5" stroke="#e4e9ec" stroke-width="1" stroke-dasharray="2 1"/><line x1="703" y1="650.5" x2="1041" y2="650.5" stroke="#e4e9ec" stroke-width="1" stroke-dasharray="2 1"/><line x1="703" y1="662.5" x2="1041" y2="662.5" stroke="#e4e9ec" stroke-width="1" stroke-dasharray="2 1"/><line x1="703" y1="674.5" x2="1041" y2="674.5" stroke="#e4e9ec" stroke-width="1" stroke-dasharray="2 1"/><line x1="703" y1="686.5" x2="1041" y2="686.5" stroke="#e4e9ec" stroke-width="1" stroke-dasharray="2 1"/><line x1="703" y1="698.5" x2="1041" y2="698.5" stroke="#e4e9ec" stroke-width="1" stroke-dasharray="2 1"/><line x1="703" y1="710.5" x2="1041" y2="710.5" stroke="#e4e9ec" stroke-width="1" stroke-dasharray="2 1"/><line x1="703" y1="722.5" x2="1041" y2="722.5" stroke="#e4e9ec" stroke-width="1" stroke-dasharray="2 1"/><line x1="703" y1="734.5" x2="1041" y2="734.5" stroke="#e4e9ec" stroke-width="1" stroke-dasharray="2 1"/><line x1="703" y1="746.5" x2="1041" y2="746.5" stroke="#e4e9ec" stroke-width="1" stroke-dasharray="2 1"/><line x1="703" y1="758.5" x2="1041" y2="758.5" stroke="#e4e9ec" stroke-width="1" stroke-dasharray="2 1"/><line x1="703" y1="770.5" x2="1041" y2="770.5" stroke="#e4e9ec" stroke-width="1" stroke-dasharray="2 1"/><line x1="718.5" y1="602" x2="718.5" y2="782" stroke="#e4e9ec" stroke-width="1" stroke-dasharray="1.5 1"/><line x1="729.8" y1="602" x2="729.8" y2="782" stroke="#e4e9ec" stroke-width="1" stroke-dasharray="1.5 1"/><line x1="741.0" y1="602" x2="741.0" y2="782" stroke="#e4e9ec" stroke-width="1" stroke-dasharray="1.5 1"/><line x1="752.3" y1="602" x2="752.3" y2="782" stroke="#e4e9ec" stroke-width="1" stroke-dasharray="1.5 1"/><line x1="763.6" y1="602" x2="763.6" y2="782" stroke="#e4e9ec" stroke-width="1" stroke-dasharray="1.5 1"/><line x1="774.8" y1="602" x2="774.8" y2="782" stroke="#e4e9ec" stroke-width="1" stroke-dasharray="1.5 1"/><line x1="786.1" y1="602" x2="786.1" y2="782" stroke="#e4e9ec" stroke-width="1" stroke-dasharray="1.5 1"/><line x1="797.4" y1="602" x2="797.4" y2="782" stroke="#e4e9ec" stroke-width="1" stroke-dasharray="1.5 1"/><line x1="808.6" y1="602" x2="808.6" y2="782" stroke="#e4e9ec" stroke-width="1" stroke-dasharray="1.5 1"/><line x1="819.9" y1="602" x2="819.9" y2="782" stroke="#e4e9ec" stroke-width="1" stroke-dasharray="1.5 1"/><line x1="831.2" y1="602" x2="831.2" y2="782" stroke="#e4e9ec" stroke-width="1" stroke-dasharray="1.5 1"/><line x1="842.4" y1="602" x2="842.4" y2="782" stroke="#e4e9ec" stroke-width="1" stroke-dasharray="1.5 1"/><line x1="853.7" y1="602" x2="853.7" y2="782" stroke="#e4e9ec" stroke-width="1" stroke-dasharray="1.5 1"/><line x1="865.0" y1="602" x2="865.0" y2="782" stroke="#e4e9ec" stroke-width="1" stroke-dasharray="1.5 1"/><line x1="876.2" y1="602" x2="876.2" y2="782" stroke="#e4e9ec" stroke-width="1" stroke-dasharray="1.5 1"/><line x1="887.5" y1="602" x2="887.5" y2="782" stroke="#e4e9ec" stroke-width="1" stroke-dasharray="1.5 1"/><line x1="898.8" y1="602" x2="898.8" y2="782" stroke="#e4e9ec" stroke-width="1" stroke-dasharray="1.5 1"/><line x1="910.0" y1="602" x2="910.0" y2="782" stroke="#e4e9ec" stroke-width="1" stroke-dasharray="1.5 1"/><line x1="921.3" y1="602" x2="921.3" y2="782" stroke="#e4e9ec" stroke-width="1" stroke-dasharray="1.5 1"/><line x1="932.6" y1="602" x2="932.6" y2="782" stroke="#e4e9ec" stroke-width="1" stroke-dasharray="1.5 1"/><line x1="943.8" y1="602" x2="943.8" y2="782" stroke="#e4e9ec" stroke-width="1" stroke-dasharray="1.5 1"/><line x1="955.1" y1="602" x2="955.1" y2="782" stroke="#e4e9ec" stroke-width="1" stroke-dasharray="1.5 1"/><line x1="966.4" y1="602" x2="966.4" y2="782" stroke="#e4e9ec" stroke-width="1" stroke-dasharray="1.5 1"/><line x1="977.6" y1="602" x2="977.6" y2="782" stroke="#e4e9ec" stroke-width="1" stroke-dasharray="1.5 1"/><line x1="988.9" y1="602" x2="988.9" y2="782" stroke="#e4e9ec" stroke-width="1" stroke-dasharray="1.5 1"/><line x1="1000.2" y1="602" x2="1000.2" y2="782" stroke="#e4e9ec" stroke-width="1" stroke-dasharray="1.5 1"/><line x1="1011.4" y1="602" x2="1011.4" y2="782" stroke="#e4e9ec" stroke-width="1" stroke-dasharray="1.5 1"/><line x1="1022.7" y1="602" x2="1022.7" y2="782" stroke="#e4e9ec" stroke-width="1" stroke-dasharray="1.5 1"/><line x1="1034.0" y1="602" x2="1034.0" y2="782" stroke="#e4e9ec" stroke-width="1" stroke-dasharray="1.5 1"/><line x1="703" y1="611.6" x2="1041" y2="611.6" stroke="#ec9a9a" stroke-width="2"/><path d="M702.9,772.4 L721.0,772.7 L728.2,774.1 L732.5,772.9 L749.7,772.7 L754.1,773.8 L758.4,772.7 L815.8,772.7 L821.5,773.8 L833.0,772.7 L838.7,773.8 L844.5,772.7 L924.9,772.7 L930.6,773.8 L936.4,773.8 L942.1,772.7 L993.8,772.7 L999.5,773.8 L1005.3,772.7 L1013.9,772.7 L1019.6,773.8 L1028.2,772.7 L1032.5,771.8 L1036.9,766.6 L1041.2,766.6" fill="none" stroke="#90e090" stroke-width="2"/><line x1="703.2" y1="599" x2="703.2" y2="783" stroke="#d2dade" stroke-width="1.6"/><line x1="703" y1="782.5" x2="1044" y2="782.5" stroke="#d2dade" stroke-width="1"/><path d="M700.5,599 L703.5,596 L706.5,599 Z" fill="#d2dade"/><path d="M1044,779.5 L1047,782.5 L1044,785.5 Z" fill="#d2dade"/><text x="697.5" y="604.2" font-size="6.2" fill="#505050" text-anchor="end">30 GB</text><text x="697.5" y="616.2" font-size="6.2" fill="#505050" text-anchor="end">28 GB</text><text x="697.5" y="628.2" font-size="6.2" fill="#505050" text-anchor="end">26 GB</text><text x="697.5" y="640.2" font-size="6.2" fill="#505050" text-anchor="end">24 GB</text><text x="697.5" y="652.2" font-size="6.2" fill="#505050" text-anchor="end">22 GB</text><text x="697.5" y="664.2" font-size="6.2" fill="#505050" text-anchor="end">20 GB</text><text x="697.5" y="676.2" font-size="6.2" fill="#505050" text-anchor="end">18 GB</text><text x="697.5" y="688.2" font-size="6.2" fill="#505050" text-anchor="end">16 GB</text><text x="697.5" y="700.2" font-size="6.2" fill="#505050" text-anchor="end">14 GB</text><text x="697.5" y="712.2" font-size="6.2" fill="#505050" text-anchor="end">12 GB</text><text x="697.5" y="724.2" font-size="6.2" fill="#505050" text-anchor="end">10 GB</text><text x="697.5" y="736.2" font-size="6.2" fill="#505050" text-anchor="end">8 GB</text><text x="697.5" y="748.2" font-size="6.2" fill="#505050" text-anchor="end">6 GB</text><text x="697.5" y="760.2" font-size="6.2" fill="#505050" text-anchor="end">4 GB</text><text x="697.5" y="772.2" font-size="6.2" fill="#505050" text-anchor="end">2 GB</text><text x="697.5" y="784.2" font-size="6.2" fill="#505050" text-anchor="end">0 B</text><text transform="translate(705.0,785) rotate(-90)" font-size="5.6" fill="#e03030" text-anchor="end" letter-spacing="0.35">11-06 05:25</text><text transform="translate(1043.0,785) rotate(-90)" font-size="5.6" fill="#e03030" text-anchor="end" letter-spacing="0.35">11-06 06:25</text><text transform="translate(720.0,785) rotate(-90)" font-size="5.6" fill="#3a3a3a" text-anchor="end" letter-spacing="0">05:28</text><text transform="translate(731.3,785) rotate(-90)" font-size="5.6" fill="#3a3a3a" text-anchor="end" letter-spacing="0">05:30</text><text transform="translate(742.5,785) rotate(-90)" font-size="5.6" fill="#3a3a3a" text-anchor="end" letter-spacing="0">05:32</text><text transform="translate(753.8,785) rotate(-90)" font-size="5.6" fill="#3a3a3a" text-anchor="end" letter-spacing="0">05:34</text><text transform="translate(765.1,785) rotate(-90)" font-size="5.6" fill="#3a3a3a" text-anchor="end" letter-spacing="0">05:36</text><text transform="translate(776.3,785) rotate(-90)" font-size="5.6" fill="#3a3a3a" text-anchor="end" letter-spacing="0">05:38</text><text transform="translate(787.6,785) rotate(-90)" font-size="5.6" fill="#3a3a3a" text-anchor="end" letter-spacing="0">05:40</text><text transform="translate(798.9,785) rotate(-90)" font-size="5.6" fill="#3a3a3a" text-anchor="end" letter-spacing="0">05:42</text><text transform="translate(810.1,785) rotate(-90)" font-size="5.6" fill="#3a3a3a" text-anchor="end" letter-spacing="0">05:44</text><text transform="translate(821.4,785) rotate(-90)" font-size="5.6" fill="#3a3a3a" text-anchor="end" letter-spacing="0">05:46</text><text transform="translate(832.7,785) rotate(-90)" font-size="5.6" fill="#3a3a3a" text-anchor="end" letter-spacing="0">05:48</text><text transform="translate(843.9,785) rotate(-90)" font-size="5.6" fill="#3a3a3a" text-anchor="end" letter-spacing="0">05:50</text><text transform="translate(855.2,785) rotate(-90)" font-size="5.6" fill="#3a3a3a" text-anchor="end" letter-spacing="0">05:52</text><text transform="translate(866.5,785) rotate(-90)" font-size="5.6" fill="#3a3a3a" text-anchor="end" letter-spacing="0">05:54</text><text transform="translate(877.7,785) rotate(-90)" font-size="5.6" fill="#3a3a3a" text-anchor="end" letter-spacing="0">05:56</text><text transform="translate(889.0,785) rotate(-90)" font-size="5.6" fill="#3a3a3a" text-anchor="end" letter-spacing="0">05:58</text><text transform="translate(900.3,785) rotate(-90)" font-size="5.6" fill="#e03030" text-anchor="end" letter-spacing="0">06:00</text><text transform="translate(911.5,785) rotate(-90)" font-size="5.6" fill="#3a3a3a" text-anchor="end" letter-spacing="0">06:02</text><text transform="translate(922.8,785) rotate(-90)" font-size="5.6" fill="#3a3a3a" text-anchor="end" letter-spacing="0">06:04</text><text transform="translate(934.1,785) rotate(-90)" font-size="5.6" fill="#3a3a3a" text-anchor="end" letter-spacing="0">06:06</text><text transform="translate(945.3,785) rotate(-90)" font-size="5.6" fill="#3a3a3a" text-anchor="end" letter-spacing="0">06:08</text><text transform="translate(956.6,785) rotate(-90)" font-size="5.6" fill="#3a3a3a" text-anchor="end" letter-spacing="0">06:10</text><text transform="translate(967.9,785) rotate(-90)" font-size="5.6" fill="#3a3a3a" text-anchor="end" letter-spacing="0">06:12</text><text transform="translate(979.1,785) rotate(-90)" font-size="5.6" fill="#3a3a3a" text-anchor="end" letter-spacing="0">06:14</text><text transform="translate(990.4,785) rotate(-90)" font-size="5.6" fill="#3a3a3a" text-anchor="end" letter-spacing="0">06:16</text><text transform="translate(1001.7,785) rotate(-90)" font-size="5.6" fill="#3a3a3a" text-anchor="end" letter-spacing="0">06:18</text><text transform="translate(1012.9,785) rotate(-90)" font-size="5.6" fill="#3a3a3a" text-anchor="end" letter-spacing="0">06:20</text><text transform="translate(1024.2,785) rotate(-90)" font-size="5.6" fill="#3a3a3a" text-anchor="end" letter-spacing="0">06:22</text><text transform="translate(1035.5,785) rotate(-90)" font-size="5.6" fill="#3a3a3a" text-anchor="end" letter-spacing="0">06:24</text><text x="797.7" y="829.8000000000001" font-size="7.1" fill="#505050" text-anchor="middle">посл</text><text x="837.7" y="829.8000000000001" font-size="7.1" fill="#505050" text-anchor="middle">мин</text><text x="878.7" y="829.8000000000001" font-size="7.1" fill="#505050" text-anchor="middle">сред</text><text x="919.7" y="829.8000000000001" font-size="7.1" fill="#505050" text-anchor="middle">макс</text><rect x="665.5" y="831.8" width="6.2" height="6.2" fill="#c81818" stroke="#777" stroke-width="0.3"/><text x="674.8" y="837.0" font-size="7.1" fill="#505050">Total disk space on /</text><text x="751" y="837.0" font-size="7.1" fill="#505050">[сред]</text><text x="813" y="837.0" font-size="7.1" fill="#505050" text-anchor="end">28.42 GB</text><text x="853" y="837.0" font-size="7.1" fill="#505050" text-anchor="end">28.42 GB</text><text x="894" y="837.0" font-size="7.1" fill="#505050" text-anchor="end">28.42 GB</text><text x="935" y="837.0" font-size="7.1" fill="#505050" text-anchor="end">28.42 GB</text><rect x="665.5" y="838.9" width="6.2" height="6.2" fill="#18c818" stroke="#777" stroke-width="0.3"/><text x="674.8" y="844.1" font-size="7.1" fill="#505050">Free disk space on /</text><text x="751" y="844.1" font-size="7.1" fill="#505050">[сред]</text><text x="813" y="844.1" font-size="7.1" fill="#505050" text-anchor="end">2.53 GB</text><text x="853" y="844.1" font-size="7.1" fill="#505050" text-anchor="end">1.4 GB</text><text x="894" y="844.1" font-size="7.1" fill="#505050" text-anchor="end">1.49 GB</text><text x="935" y="844.1" font-size="7.1" fill="#505050" text-anchor="end">2.53 GB</text><text x="1053" y="853.5" font-size="4.3" fill="#a8a8a8" text-anchor="end">Данные из history. Сгенерировано за 0.03 сек.</text><text transform="translate(1055,830) rotate(-90)" font-size="4.3" fill="#c8c8c8">htt.. www.zabbix.com</text><text x="1259.6" y="632.6" font-size="8.7" fill="#3a3a3a" text-anchor="middle">vistep.ru: Memory usage (1ч)</text><rect x="1106" y="638.8" width="339" height="106.30000000000007" fill="#e6e6e6"/><line x1="1106" y1="639.3" x2="1445" y2="639.3" stroke="#d0d7dc" stroke-width="1" stroke-dasharray="2 1"/><line x1="1106" y1="662.9" x2="1445" y2="662.9" stroke="#d0d7dc" stroke-width="1" stroke-dasharray="2 1"/><line x1="1106" y1="690.9" x2="1445" y2="690.9" stroke="#d0d7dc" stroke-width="1" stroke-dasharray="2 1"/><line x1="1106" y1="718.1" x2="1445" y2="718.1" stroke="#d0d7dc" stroke-width="1" stroke-dasharray="2 1"/><line x1="1106" y1="651.1" x2="1445" y2="651.1" stroke="#d0d7dc" stroke-width="1" stroke-dasharray="1.5 2"/><line x1="1106" y1="676.9" x2="1445" y2="676.9" stroke="#d0d7dc" stroke-width="1" stroke-dasharray="1.5 2"/><line x1="1106" y1="704.5" x2="1445" y2="704.5" stroke="#d0d7dc" stroke-width="1" stroke-dasharray="1.5 2"/><line x1="1106" y1="731.9" x2="1445" y2="731.9" stroke="#d0d7dc" stroke-width="1" stroke-dasharray="1.5 2"/><line x1="1121.5" y1="638.8" x2="1121.5" y2="745.1" stroke="#d0d7dc" stroke-width="1" stroke-dasharray="1.5 1"/><line x1="1132.8" y1="638.8" x2="1132.8" y2="745.1" stroke="#d0d7dc" stroke-width="1" stroke-dasharray="1.5 1"/><line x1="1144.1" y1="638.8" x2="1144.1" y2="745.1" stroke="#d0d7dc" stroke-width="1" stroke-dasharray="1.5 1"/><line x1="1155.4" y1="638.8" x2="1155.4" y2="745.1" stroke="#d0d7dc" stroke-width="1" stroke-dasharray="1.5 1"/><line x1="1166.7" y1="638.8" x2="1166.7" y2="745.1" stroke="#d0d7dc" stroke-width="1" stroke-dasharray="1.5 1"/><line x1="1178.0" y1="638.8" x2="1178.0" y2="745.1" stroke="#d0d7dc" stroke-width="1" stroke-dasharray="1.5 1"/><line x1="1189.3" y1="638.8" x2="1189.3" y2="745.1" stroke="#d0d7dc" stroke-width="1" stroke-dasharray="1.5 1"/><line x1="1200.6" y1="638.8" x2="1200.6" y2="745.1" stroke="#d0d7dc" stroke-width="1" stroke-dasharray="1.5 1"/><line x1="1211.9" y1="638.8" x2="1211.9" y2="745.1" stroke="#d0d7dc" stroke-width="1" stroke-dasharray="1.5 1"/><line x1="1223.2" y1="638.8" x2="1223.2" y2="745.1" stroke="#d0d7dc" stroke-width="1" stroke-dasharray="1.5 1"/><line x1="1234.5" y1="638.8" x2="1234.5" y2="745.1" stroke="#d0d7dc" stroke-width="1" stroke-dasharray="1.5 1"/><line x1="1245.8" y1="638.8" x2="1245.8" y2="745.1" stroke="#d0d7dc" stroke-width="1" stroke-dasharray="1.5 1"/><line x1="1257.1" y1="638.8" x2="1257.1" y2="745.1" stroke="#d0d7dc" stroke-width="1" stroke-dasharray="1.5 1"/><line x1="1268.4" y1="638.8" x2="1268.4" y2="745.1" stroke="#d0d7dc" stroke-width="1" stroke-dasharray="1.5 1"/><line x1="1279.7" y1="638.8" x2="1279.7" y2="745.1" stroke="#d0d7dc" stroke-width="1" stroke-dasharray="1.5 1"/><line x1="1291.0" y1="638.8" x2="1291.0" y2="745.1" stroke="#d0d7dc" stroke-width="1" stroke-dasharray="1.5 1"/><line x1="1302.3" y1="638.8" x2="1302.3" y2="745.1" stroke="#d0d7dc" stroke-width="1" stroke-dasharray="1.5 1"/><line x1="1313.6" y1="638.8" x2="1313.6" y2="745.1" stroke="#d0d7dc" stroke-width="1" stroke-dasharray="1.5 1"/><line x1="1324.9" y1="638.8" x2="1324.9" y2="745.1" stroke="#d0d7dc" stroke-width="1" stroke-dasharray="1.5 1"/><line x1="1336.2" y1="638.8" x2="1336.2" y2="745.1" stroke="#d0d7dc" stroke-width="1" stroke-dasharray="1.5 1"/><line x1="1347.5" y1="638.8" x2="1347.5" y2="745.1" stroke="#d0d7dc" stroke-width="1" stroke-dasharray="1.5 1"/><line x1="1358.8" y1="638.8" x2="1358.8" y2="745.1" stroke="#d0d7dc" stroke-width="1" stroke-dasharray="1.5 1"/><line x1="1370.1" y1="638.8" x2="1370.1" y2="745.1" stroke="#d0d7dc" stroke-width="1" stroke-dasharray="1.5 1"/><line x1="1381.4" y1="638.8" x2="1381.4" y2="745.1" stroke="#d0d7dc" stroke-width="1" stroke-dasharray="1.5 1"/><line x1="1392.7" y1="638.8" x2="1392.7" y2="745.1" stroke="#d0d7dc" stroke-width="1" stroke-dasharray="1.5 1"/><line x1="1404.0" y1="638.8" x2="1404.0" y2="745.1" stroke="#d0d7dc" stroke-width="1" stroke-dasharray="1.5 1"/><line x1="1415.3" y1="638.8" x2="1415.3" y2="745.1" stroke="#d0d7dc" stroke-width="1" stroke-dasharray="1.5 1"/><line x1="1426.6" y1="638.8" x2="1426.6" y2="745.1" stroke="#d0d7dc" stroke-width="1" stroke-dasharray="1.5 1"/><line x1="1437.9" y1="638.8" x2="1437.9" y2="745.1" stroke="#d0d7dc" stroke-width="1" stroke-dasharray="1.5 1"/><path d="M1106.0,663.5 L1115.1,665.3 L1126.2,662.4 L1132.8,660.7 L1139.4,661.8 L1148.2,660.2 L1157.0,661.3 L1170.3,661.3 L1183.5,658.0 L1190.1,660.9 L1201.2,660.9 L1210.0,662.0 L1223.2,661.3 L1234.2,662.0 L1240.9,664.6 L1249.7,662.6 L1269.5,661.8 L1273.9,659.1 L1285.0,659.1 L1293.8,660.9 L1307.0,664.6 L1311.4,662.4 L1318.1,663.5 L1324.7,661.3 L1346.7,662.0 L1357.8,664.0 L1368.8,662.4 L1404.1,661.8 L1408.5,659.1 L1415.1,660.2 L1423.9,658.4 L1434.9,659.8 L1445.0,659.8 L1445.0,745.1 L1106.0,745.1 Z" fill="url(#gMem)"/><line x1="1106" y1="744.6" x2="1445" y2="744.6" stroke="#f0a050" stroke-width="1.4" stroke-dasharray="1.5 1.5"/><line x1="1106.2" y1="635.8" x2="1106.2" y2="746.1" stroke="#d2dade" stroke-width="1.6"/><line x1="1106" y1="745.6" x2="1448" y2="745.6" stroke="#d2dade" stroke-width="1"/><path d="M1103.5,635.8 L1106.5,632.8 L1109.5,635.8 Z" fill="#d2dade"/><path d="M1448,742.6 L1451,745.6 L1448,748.6 Z" fill="#d2dade"/><text x="1101" y="641.0" font-size="6.2" fill="#505050" text-anchor="end">7.79 GB</text><text x="1101" y="664.6" font-size="6.2" fill="#505050" text-anchor="end">6.00 GB</text><text x="1101" y="692.6" font-size="6.2" fill="#505050" text-anchor="end">4.00 GB</text><text x="1101" y="719.8" font-size="6.2" fill="#505050" text-anchor="end">2.00 GB</text><text x="1101" y="747.3" font-size="6.2" fill="#505050" text-anchor="end">0 B</text><text transform="translate(1108.0,748.1) rotate(-90)" font-size="5.6" fill="#e03030" text-anchor="end" letter-spacing="0.35">11-06 05:25</text><text transform="translate(1447.0,748.1) rotate(-90)" font-size="5.6" fill="#e03030" text-anchor="end" letter-spacing="0.35">11-06 06:25</text><text transform="translate(1123.0,748.1) rotate(-90)" font-size="5.6" fill="#3a3a3a" text-anchor="end" letter-spacing="0">05:28</text><text transform="translate(1134.3,748.1) rotate(-90)" font-size="5.6" fill="#3a3a3a" text-anchor="end" letter-spacing="0">05:30</text><text transform="translate(1145.6,748.1) rotate(-90)" font-size="5.6" fill="#3a3a3a" text-anchor="end" letter-spacing="0">05:32</text><text transform="translate(1156.9,748.1) rotate(-90)" font-size="5.6" fill="#3a3a3a" text-anchor="end" letter-spacing="0">05:34</text><text transform="translate(1168.2,748.1) rotate(-90)" font-size="5.6" fill="#3a3a3a" text-anchor="end" letter-spacing="0">05:36</text><text transform="translate(1179.5,748.1) rotate(-90)" font-size="5.6" fill="#3a3a3a" text-anchor="end" letter-spacing="0">05:38</text><text transform="translate(1190.8,748.1) rotate(-90)" font-size="5.6" fill="#3a3a3a" text-anchor="end" letter-spacing="0">05:40</text><text transform="translate(1202.1,748.1) rotate(-90)" font-size="5.6" fill="#3a3a3a" text-anchor="end" letter-spacing="0">05:42</text><text transform="translate(1213.4,748.1) rotate(-90)" font-size="5.6" fill="#3a3a3a" text-anchor="end" letter-spacing="0">05:44</text><text transform="translate(1224.7,748.1) rotate(-90)" font-size="5.6" fill="#3a3a3a" text-anchor="end" letter-spacing="0">05:46</text><text transform="translate(1236.0,748.1) rotate(-90)" font-size="5.6" fill="#3a3a3a" text-anchor="end" letter-spacing="0">05:48</text><text transform="translate(1247.3,748.1) rotate(-90)" font-size="5.6" fill="#3a3a3a" text-anchor="end" letter-spacing="0">05:50</text><text transform="translate(1258.6,748.1) rotate(-90)" font-size="5.6" fill="#3a3a3a" text-anchor="end" letter-spacing="0">05:52</text><text transform="translate(1269.9,748.1) rotate(-90)" font-size="5.6" fill="#3a3a3a" text-anchor="end" letter-spacing="0">05:54</text><text transform="translate(1281.2,748.1) rotate(-90)" font-size="5.6" fill="#3a3a3a" text-anchor="end" letter-spacing="0">05:56</text><text transform="translate(1292.5,748.1) rotate(-90)" font-size="5.6" fill="#3a3a3a" text-anchor="end" letter-spacing="0">05:58</text><text transform="translate(1303.8,748.1) rotate(-90)" font-size="5.6" fill="#e03030" text-anchor="end" letter-spacing="0">06:00</text><text transform="translate(1315.1,748.1) rotate(-90)" font-size="5.6" fill="#3a3a3a" text-anchor="end" letter-spacing="0">06:02</text><text transform="translate(1326.4,748.1) rotate(-90)" font-size="5.6" fill="#3a3a3a" text-anchor="end" letter-spacing="0">06:04</text><text transform="translate(1337.7,748.1) rotate(-90)" font-size="5.6" fill="#3a3a3a" text-anchor="end" letter-spacing="0">06:06</text><text transform="translate(1349.0,748.1) rotate(-90)" font-size="5.6" fill="#3a3a3a" text-anchor="end" letter-spacing="0">06:08</text><text transform="translate(1360.3,748.1) rotate(-90)" font-size="5.6" fill="#3a3a3a" text-anchor="end" letter-spacing="0">06:10</text><text transform="translate(1371.6,748.1) rotate(-90)" font-size="5.6" fill="#3a3a3a" text-anchor="end" letter-spacing="0">06:12</text><text transform="translate(1382.9,748.1) rotate(-90)" font-size="5.6" fill="#3a3a3a" text-anchor="end" letter-spacing="0">06:14</text><text transform="translate(1394.2,748.1) rotate(-90)" font-size="5.6" fill="#3a3a3a" text-anchor="end" letter-spacing="0">06:16</text><text transform="translate(1405.5,748.1) rotate(-90)" font-size="5.6" fill="#3a3a3a" text-anchor="end" letter-spacing="0">06:18</text><text transform="translate(1416.8,748.1) rotate(-90)" font-size="5.6" fill="#3a3a3a" text-anchor="end" letter-spacing="0">06:20</text><text transform="translate(1428.1,748.1) rotate(-90)" font-size="5.6" fill="#3a3a3a" text-anchor="end" letter-spacing="0">06:22</text><text transform="translate(1439.4,748.1) rotate(-90)" font-size="5.6" fill="#3a3a3a" text-anchor="end" letter-spacing="0">06:24</text><text x="1265" y="810.2" font-size="7.1" fill="#505050">[&lt; 20M]</text><text x="1191.5" y="792.5" font-size="7.1" fill="#505050" text-anchor="middle">посл</text><text x="1228.5" y="792.5" font-size="7.1" fill="#505050" text-anchor="middle">мин</text><text x="1265.5" y="792.5" font-size="7.1" fill="#505050" text-anchor="middle">сред</text><text x="1302.5" y="792.5" font-size="7.1" fill="#505050" text-anchor="middle">макс</text><rect x="1068.8" y="794.6" width="6.2" height="6.2" fill="#18c018" stroke="#777" stroke-width="0.3"/><text x="1077" y="799.8000000000001" font-size="7.1" fill="#505050">Available memory</text><text x="1148" y="799.8000000000001" font-size="7.1" fill="#505050">[сред]</text><text x="1204" y="799.8000000000001" font-size="7.1" fill="#505050" text-anchor="end">6.22 GB</text><text x="1241" y="799.8000000000001" font-size="7.1" fill="#505050" text-anchor="end">5.82 GB</text><text x="1278" y="799.8000000000001" font-size="7.1" fill="#505050" text-anchor="end">6.07 GB</text><text x="1315" y="799.8000000000001" font-size="7.1" fill="#505050" text-anchor="end">6.35 GB</text><circle cx="1071.8" cy="808" r="3" fill="#f0b080" stroke="#d08050" stroke-width="0.6"/><text x="1077" y="810.2" font-size="7.1" fill="#505050">Триггер: Lack of available memory on server vistep.ru</text><text x="1457" y="817.0" font-size="4.3" fill="#a8a8a8" text-anchor="end">Данные из history. Сгенерировано за 0.03 сек.</text><text transform="translate(1459,793) rotate(-90)" font-size="4.3" fill="#c8c8c8">htt.. www.zabbix.com</text><text x="1661.8" y="632.6" font-size="8.7" fill="#3a3a3a" text-anchor="middle">vistep.ru: Network traffic on docker0 (1ч)</text><rect x="1508" y="638.8" width="339" height="106.30000000000007" fill="#e6e6e6"/><line x1="1508" y1="639.3" x2="1847" y2="639.3" stroke="#d0d7dc" stroke-width="1" stroke-dasharray="2 1"/><line x1="1508" y1="657.0" x2="1847" y2="657.0" stroke="#d0d7dc" stroke-width="1" stroke-dasharray="2 1"/><line x1="1508" y1="674.7" x2="1847" y2="674.7" stroke="#d0d7dc" stroke-width="1" stroke-dasharray="2 1"/><line x1="1508" y1="692.5" x2="1847" y2="692.5" stroke="#d0d7dc" stroke-width="1" stroke-dasharray="2 1"/><line x1="1508" y1="710.2" x2="1847" y2="710.2" stroke="#d0d7dc" stroke-width="1" stroke-dasharray="2 1"/><line x1="1508" y1="727.9" x2="1847" y2="727.9" stroke="#d0d7dc" stroke-width="1" stroke-dasharray="2 1"/><line x1="1508" y1="648.2" x2="1847" y2="648.2" stroke="#d0d7dc" stroke-width="1" stroke-dasharray="1.5 2"/><line x1="1508" y1="665.9" x2="1847" y2="665.9" stroke="#d0d7dc" stroke-width="1" stroke-dasharray="1.5 2"/><line x1="1508" y1="683.6" x2="1847" y2="683.6" stroke="#d0d7dc" stroke-width="1" stroke-dasharray="1.5 2"/><line x1="1508" y1="701.3" x2="1847" y2="701.3" stroke="#d0d7dc" stroke-width="1" stroke-dasharray="1.5 2"/><line x1="1508" y1="719.0" x2="1847" y2="719.0" stroke="#d0d7dc" stroke-width="1" stroke-dasharray="1.5 2"/><line x1="1508" y1="736.8" x2="1847" y2="736.8" stroke="#d0d7dc" stroke-width="1" stroke-dasharray="1.5 2"/><line x1="1523.5" y1="638.8" x2="1523.5" y2="745.1" stroke="#d0d7dc" stroke-width="1" stroke-dasharray="1.5 1"/><line x1="1534.8" y1="638.8" x2="1534.8" y2="745.1" stroke="#d0d7dc" stroke-width="1" stroke-dasharray="1.5 1"/><line x1="1546.1" y1="638.8" x2="1546.1" y2="745.1" stroke="#d0d7dc" stroke-width="1" stroke-dasharray="1.5 1"/><line x1="1557.4" y1="638.8" x2="1557.4" y2="745.1" stroke="#d0d7dc" stroke-width="1" stroke-dasharray="1.5 1"/><line x1="1568.7" y1="638.8" x2="1568.7" y2="745.1" stroke="#d0d7dc" stroke-width="1" stroke-dasharray="1.5 1"/><line x1="1580.0" y1="638.8" x2="1580.0" y2="745.1" stroke="#d0d7dc" stroke-width="1" stroke-dasharray="1.5 1"/><line x1="1591.3" y1="638.8" x2="1591.3" y2="745.1" stroke="#d0d7dc" stroke-width="1" stroke-dasharray="1.5 1"/><line x1="1602.6" y1="638.8" x2="1602.6" y2="745.1" stroke="#d0d7dc" stroke-width="1" stroke-dasharray="1.5 1"/><line x1="1613.9" y1="638.8" x2="1613.9" y2="745.1" stroke="#d0d7dc" stroke-width="1" stroke-dasharray="1.5 1"/><line x1="1625.2" y1="638.8" x2="1625.2" y2="745.1" stroke="#d0d7dc" stroke-width="1" stroke-dasharray="1.5 1"/><line x1="1636.5" y1="638.8" x2="1636.5" y2="745.1" stroke="#d0d7dc" stroke-width="1" stroke-dasharray="1.5 1"/><line x1="1647.8" y1="638.8" x2="1647.8" y2="745.1" stroke="#d0d7dc" stroke-width="1" stroke-dasharray="1.5 1"/><line x1="1659.1" y1="638.8" x2="1659.1" y2="745.1" stroke="#d0d7dc" stroke-width="1" stroke-dasharray="1.5 1"/><line x1="1670.4" y1="638.8" x2="1670.4" y2="745.1" stroke="#d0d7dc" stroke-width="1" stroke-dasharray="1.5 1"/><line x1="1681.7" y1="638.8" x2="1681.7" y2="745.1" stroke="#d0d7dc" stroke-width="1" stroke-dasharray="1.5 1"/><line x1="1693.0" y1="638.8" x2="1693.0" y2="745.1" stroke="#d0d7dc" stroke-width="1" stroke-dasharray="1.5 1"/><line x1="1704.3" y1="638.8" x2="1704.3" y2="745.1" stroke="#d0d7dc" stroke-width="1" stroke-dasharray="1.5 1"/><line x1="1715.6" y1="638.8" x2="1715.6" y2="745.1" stroke="#d0d7dc" stroke-width="1" stroke-dasharray="1.5 1"/><line x1="1726.9" y1="638.8" x2="1726.9" y2="745.1" stroke="#d0d7dc" stroke-width="1" stroke-dasharray="1.5 1"/><line x1="1738.2" y1="638.8" x2="1738.2" y2="745.1" stroke="#d0d7dc" stroke-width="1" stroke-dasharray="1.5 1"/><line x1="1749.5" y1="638.8" x2="1749.5" y2="745.1" stroke="#d0d7dc" stroke-width="1" stroke-dasharray="1.5 1"/><line x1="1760.8" y1="638.8" x2="1760.8" y2="745.1" stroke="#d0d7dc" stroke-width="1" stroke-dasharray="1.5 1"/><line x1="1772.1" y1="638.8" x2="1772.1" y2="745.1" stroke="#d0d7dc" stroke-width="1" stroke-dasharray="1.5 1"/><line x1="1783.4" y1="638.8" x2="1783.4" y2="745.1" stroke="#d0d7dc" stroke-width="1" stroke-dasharray="1.5 1"/><line x1="1794.7" y1="638.8" x2="1794.7" y2="745.1" stroke="#d0d7dc" stroke-width="1" stroke-dasharray="1.5 1"/><line x1="1806.0" y1="638.8" x2="1806.0" y2="745.1" stroke="#d0d7dc" stroke-width="1" stroke-dasharray="1.5 1"/><line x1="1817.3" y1="638.8" x2="1817.3" y2="745.1" stroke="#d0d7dc" stroke-width="1" stroke-dasharray="1.5 1"/><line x1="1828.6" y1="638.8" x2="1828.6" y2="745.1" stroke="#d0d7dc" stroke-width="1" stroke-dasharray="1.5 1"/><line x1="1839.9" y1="638.8" x2="1839.9" y2="745.1" stroke="#d0d7dc" stroke-width="1" stroke-dasharray="1.5 1"/><line x1="1508" y1="744.3000000000001" x2="1847" y2="744.3000000000001" stroke="#4a4ae0" stroke-width="2"/><line x1="1508.2" y1="635.8" x2="1508.2" y2="746.1" stroke="#d2dade" stroke-width="1.6"/><line x1="1508" y1="745.6" x2="1850" y2="745.6" stroke="#d2dade" stroke-width="1"/><path d="M1505.5,635.8 L1508.5,632.8 L1511.5,635.8 Z" fill="#d2dade"/><path d="M1850,742.6 L1853,745.6 L1850,748.6 Z" fill="#d2dade"/><text x="1503.5" y="641.0" font-size="6.2" fill="#505050" text-anchor="end">1.2 bps</text><text x="1503.5" y="658.7" font-size="6.2" fill="#505050" text-anchor="end">1.0 bps</text><text x="1503.5" y="676.4" font-size="6.2" fill="#505050" text-anchor="end">0.8 bps</text><text x="1503.5" y="694.2" font-size="6.2" fill="#505050" text-anchor="end">0.6 bps</text><text x="1503.5" y="711.9" font-size="6.2" fill="#505050" text-anchor="end">0.4 bps</text><text x="1503.5" y="729.6" font-size="6.2" fill="#505050" text-anchor="end">0.2 bps</text><text x="1503.5" y="747.3" font-size="6.2" fill="#505050" text-anchor="end">0 bps</text><text transform="translate(1510.0,748.1) rotate(-90)" font-size="5.6" fill="#e03030" text-anchor="end" letter-spacing="0.35">11-06 05:25</text><text transform="translate(1849.0,748.1) rotate(-90)" font-size="5.6" fill="#e03030" text-anchor="end" letter-spacing="0.35">11-06 06:25</text><text transform="translate(1525.0,748.1) rotate(-90)" font-size="5.6" fill="#3a3a3a" text-anchor="end" letter-spacing="0">05:28</text><text transform="translate(1536.3,748.1) rotate(-90)" font-size="5.6" fill="#3a3a3a" text-anchor="end" letter-spacing="0">05:30</text><text transform="translate(1547.6,748.1) rotate(-90)" font-size="5.6" fill="#3a3a3a" text-anchor="end" letter-spacing="0">05:32</text><text transform="translate(1558.9,748.1) rotate(-90)" font-size="5.6" fill="#3a3a3a" text-anchor="end" letter-spacing="0">05:34</text><text transform="translate(1570.2,748.1) rotate(-90)" font-size="5.6" fill="#3a3a3a" text-anchor="end" letter-spacing="0">05:36</text><text transform="translate(1581.5,748.1) rotate(-90)" font-size="5.6" fill="#3a3a3a" text-anchor="end" letter-spacing="0">05:38</text><text transform="translate(1592.8,748.1) rotate(-90)" font-size="5.6" fill="#3a3a3a" text-anchor="end" letter-spacing="0">05:40</text><text transform="translate(1604.1,748.1) rotate(-90)" font-size="5.6" fill="#3a3a3a" text-anchor="end" letter-spacing="0">05:42</text><text transform="translate(1615.4,748.1) rotate(-90)" font-size="5.6" fill="#3a3a3a" text-anchor="end" letter-spacing="0">05:44</text><text transform="translate(1626.7,748.1) rotate(-90)" font-size="5.6" fill="#3a3a3a" text-anchor="end" letter-spacing="0">05:46</text><text transform="translate(1638.0,748.1) rotate(-90)" font-size="5.6" fill="#3a3a3a" text-anchor="end" letter-spacing="0">05:48</text><text transform="translate(1649.3,748.1) rotate(-90)" font-size="5.6" fill="#3a3a3a" text-anchor="end" letter-spacing="0">05:50</text><text transform="translate(1660.6,748.1) rotate(-90)" font-size="5.6" fill="#3a3a3a" text-anchor="end" letter-spacing="0">05:52</text><text transform="translate(1671.9,748.1) rotate(-90)" font-size="5.6" fill="#3a3a3a" text-anchor="end" letter-spacing="0">05:54</text><text transform="translate(1683.2,748.1) rotate(-90)" font-size="5.6" fill="#3a3a3a" text-anchor="end" letter-spacing="0">05:56</text><text transform="translate(1694.5,748.1) rotate(-90)" font-size="5.6" fill="#3a3a3a" text-anchor="end" letter-spacing="0">05:58</text><text transform="translate(1705.8,748.1) rotate(-90)" font-size="5.6" fill="#e03030" text-anchor="end" letter-spacing="0">06:00</text><text transform="translate(1717.1,748.1) rotate(-90)" font-size="5.6" fill="#3a3a3a" text-anchor="end" letter-spacing="0">06:02</text><text transform="translate(1728.4,748.1) rotate(-90)" font-size="5.6" fill="#3a3a3a" text-anchor="end" letter-spacing="0">06:04</text><text transform="translate(1739.7,748.1) rotate(-90)" font-size="5.6" fill="#3a3a3a" text-anchor="end" letter-spacing="0">06:06</text><text transform="translate(1751.0,748.1) rotate(-90)" font-size="5.6" fill="#3a3a3a" text-anchor="end" letter-spacing="0">06:08</text><text transform="translate(1762.3,748.1) rotate(-90)" font-size="5.6" fill="#3a3a3a" text-anchor="end" letter-spacing="0">06:10</text><text transform="translate(1773.6,748.1) rotate(-90)" font-size="5.6" fill="#3a3a3a" text-anchor="end" letter-spacing="0">06:12</text><text transform="translate(1784.9,748.1) rotate(-90)" font-size="5.6" fill="#3a3a3a" text-anchor="end" letter-spacing="0">06:14</text><text transform="translate(1796.2,748.1) rotate(-90)" font-size="5.6" fill="#3a3a3a" text-anchor="end" letter-spacing="0">06:16</text><text transform="translate(1807.5,748.1) rotate(-90)" font-size="5.6" fill="#3a3a3a" text-anchor="end" letter-spacing="0">06:18</text><text transform="translate(1818.8,748.1) rotate(-90)" font-size="5.6" fill="#3a3a3a" text-anchor="end" letter-spacing="0">06:20</text><text transform="translate(1830.1,748.1) rotate(-90)" font-size="5.6" fill="#3a3a3a" text-anchor="end" letter-spacing="0">06:22</text><text transform="translate(1841.4,748.1) rotate(-90)" font-size="5.6" fill="#3a3a3a" text-anchor="end" letter-spacing="0">06:24</text><text x="1647.5" y="792.5" font-size="7.1" fill="#505050" text-anchor="middle">посл</text><text x="1676.5" y="792.5" font-size="7.1" fill="#505050" text-anchor="middle">мин</text><text x="1705.5" y="792.5" font-size="7.1" fill="#505050" text-anchor="middle">сред</text><text x="1733.5" y="792.5" font-size="7.1" fill="#505050" text-anchor="middle">макс</text><rect x="1471" y="794.6" width="6.2" height="6.2" fill="#18a018" stroke="#777" stroke-width="0.3"/><text x="1480" y="799.8000000000001" font-size="7.1" fill="#505050">Incoming network traffic on docker0</text><text x="1607.8" y="799.8000000000001" font-size="7.1" fill="#505050">[сред]</text><text x="1656" y="799.8000000000001" font-size="7.1" fill="#505050" text-anchor="end">0 bps</text><text x="1685" y="799.8000000000001" font-size="7.1" fill="#505050" text-anchor="end">0 bps</text><text x="1714" y="799.8000000000001" font-size="7.1" fill="#505050" text-anchor="end">0 bps</text><text x="1742" y="799.8000000000001" font-size="7.1" fill="#505050" text-anchor="end">0 bps</text><rect x="1471" y="802.3" width="6.2" height="6.2" fill="#3030e8" stroke="#777" stroke-width="0.3"/><text x="1480" y="807.5" font-size="7.1" fill="#505050">Outgoing network traffic on docker0</text><text x="1607.8" y="807.5" font-size="7.1" fill="#505050">[сред]</text><text x="1656" y="807.5" font-size="7.1" fill="#505050" text-anchor="end">0 bps</text><text x="1685" y="807.5" font-size="7.1" fill="#505050" text-anchor="end">0 bps</text><text x="1714" y="807.5" font-size="7.1" fill="#505050" text-anchor="end">0 bps</text><text x="1742" y="807.5" font-size="7.1" fill="#505050" text-anchor="end">0 bps</text><text x="1858" y="817.0" font-size="4.3" fill="#a8a8a8" text-anchor="end">Данные из history. Сгенерировано за 0.03 сек.</text><text transform="translate(1861,793) rotate(-90)" font-size="4.3" fill="#c8c8c8">htt.. www.zabbix.com</text><text x="453.4" y="869" font-size="8.7" fill="#3a3a3a" text-anchor="middle">vistep.ru: Network traffic on ens18 (1ч)</text><rect x="300" y="875" width="338.5" height="105.70000000000005" fill="#e6e6e6"/><line x1="300" y1="875.5" x2="638.5" y2="875.5" stroke="#d0d7dc" stroke-width="1" stroke-dasharray="2 1"/><line x1="300" y1="893.1" x2="638.5" y2="893.1" stroke="#d0d7dc" stroke-width="1" stroke-dasharray="2 1"/><line x1="300" y1="910.7" x2="638.5" y2="910.7" stroke="#d0d7dc" stroke-width="1" stroke-dasharray="2 1"/><line x1="300" y1="928.4" x2="638.5" y2="928.4" stroke="#d0d7dc" stroke-width="1" stroke-dasharray="2 1"/><line x1="300" y1="946.0" x2="638.5" y2="946.0" stroke="#d0d7dc" stroke-width="1" stroke-dasharray="2 1"/><line x1="300" y1="963.6" x2="638.5" y2="963.6" stroke="#d0d7dc" stroke-width="1" stroke-dasharray="2 1"/><line x1="300" y1="884.3" x2="638.5" y2="884.3" stroke="#d0d7dc" stroke-width="1" stroke-dasharray="1.5 2"/><line x1="300" y1="901.9" x2="638.5" y2="901.9" stroke="#d0d7dc" stroke-width="1" stroke-dasharray="1.5 2"/><line x1="300" y1="919.5" x2="638.5" y2="919.5" stroke="#d0d7dc" stroke-width="1" stroke-dasharray="1.5 2"/><line x1="300" y1="937.2" x2="638.5" y2="937.2" stroke="#d0d7dc" stroke-width="1" stroke-dasharray="1.5 2"/><line x1="300" y1="954.8" x2="638.5" y2="954.8" stroke="#d0d7dc" stroke-width="1" stroke-dasharray="1.5 2"/><line x1="300" y1="972.4" x2="638.5" y2="972.4" stroke="#d0d7dc" stroke-width="1" stroke-dasharray="1.5 2"/><line x1="315.5" y1="875" x2="315.5" y2="980.7" stroke="#d0d7dc" stroke-width="1" stroke-dasharray="1.5 1"/><line x1="326.8" y1="875" x2="326.8" y2="980.7" stroke="#d0d7dc" stroke-width="1" stroke-dasharray="1.5 1"/><line x1="338.1" y1="875" x2="338.1" y2="980.7" stroke="#d0d7dc" stroke-width="1" stroke-dasharray="1.5 1"/><line x1="349.4" y1="875" x2="349.4" y2="980.7" stroke="#d0d7dc" stroke-width="1" stroke-dasharray="1.5 1"/><line x1="360.6" y1="875" x2="360.6" y2="980.7" stroke="#d0d7dc" stroke-width="1" stroke-dasharray="1.5 1"/><line x1="371.9" y1="875" x2="371.9" y2="980.7" stroke="#d0d7dc" stroke-width="1" stroke-dasharray="1.5 1"/><line x1="383.2" y1="875" x2="383.2" y2="980.7" stroke="#d0d7dc" stroke-width="1" stroke-dasharray="1.5 1"/><line x1="394.5" y1="875" x2="394.5" y2="980.7" stroke="#d0d7dc" stroke-width="1" stroke-dasharray="1.5 1"/><line x1="405.8" y1="875" x2="405.8" y2="980.7" stroke="#d0d7dc" stroke-width="1" stroke-dasharray="1.5 1"/><line x1="417.1" y1="875" x2="417.1" y2="980.7" stroke="#d0d7dc" stroke-width="1" stroke-dasharray="1.5 1"/><line x1="428.3" y1="875" x2="428.3" y2="980.7" stroke="#d0d7dc" stroke-width="1" stroke-dasharray="1.5 1"/><line x1="439.6" y1="875" x2="439.6" y2="980.7" stroke="#d0d7dc" stroke-width="1" stroke-dasharray="1.5 1"/><line x1="450.9" y1="875" x2="450.9" y2="980.7" stroke="#d0d7dc" stroke-width="1" stroke-dasharray="1.5 1"/><line x1="462.2" y1="875" x2="462.2" y2="980.7" stroke="#d0d7dc" stroke-width="1" stroke-dasharray="1.5 1"/><line x1="473.5" y1="875" x2="473.5" y2="980.7" stroke="#d0d7dc" stroke-width="1" stroke-dasharray="1.5 1"/><line x1="484.8" y1="875" x2="484.8" y2="980.7" stroke="#d0d7dc" stroke-width="1" stroke-dasharray="1.5 1"/><line x1="496.0" y1="875" x2="496.0" y2="980.7" stroke="#d0d7dc" stroke-width="1" stroke-dasharray="1.5 1"/><line x1="507.3" y1="875" x2="507.3" y2="980.7" stroke="#d0d7dc" stroke-width="1" stroke-dasharray="1.5 1"/><line x1="518.6" y1="875" x2="518.6" y2="980.7" stroke="#d0d7dc" stroke-width="1" stroke-dasharray="1.5 1"/><line x1="529.9" y1="875" x2="529.9" y2="980.7" stroke="#d0d7dc" stroke-width="1" stroke-dasharray="1.5 1"/><line x1="541.2" y1="875" x2="541.2" y2="980.7" stroke="#d0d7dc" stroke-width="1" stroke-dasharray="1.5 1"/><line x1="552.5" y1="875" x2="552.5" y2="980.7" stroke="#d0d7dc" stroke-width="1" stroke-dasharray="1.5 1"/><line x1="563.7" y1="875" x2="563.7" y2="980.7" stroke="#d0d7dc" stroke-width="1" stroke-dasharray="1.5 1"/><line x1="575.0" y1="875" x2="575.0" y2="980.7" stroke="#d0d7dc" stroke-width="1" stroke-dasharray="1.5 1"/><line x1="586.3" y1="875" x2="586.3" y2="980.7" stroke="#d0d7dc" stroke-width="1" stroke-dasharray="1.5 1"/><line x1="597.6" y1="875" x2="597.6" y2="980.7" stroke="#d0d7dc" stroke-width="1" stroke-dasharray="1.5 1"/><line x1="608.9" y1="875" x2="608.9" y2="980.7" stroke="#d0d7dc" stroke-width="1" stroke-dasharray="1.5 1"/><line x1="620.2" y1="875" x2="620.2" y2="980.7" stroke="#d0d7dc" stroke-width="1" stroke-dasharray="1.5 1"/><line x1="631.4" y1="875" x2="631.4" y2="980.7" stroke="#d0d7dc" stroke-width="1" stroke-dasharray="1.5 1"/><path d="M524.2,942.5 L529.5,947.3 L534.8,931.9 L540.7,940.8 L546.6,938.4 L551.9,943.7 L564.3,924.3 L568.2,897.7 L574.5,900.7 L580.5,888.1 L592.0,908.9 L596.9,944.3 L602.4,940.8 L608.5,945.5 L613.8,945.5 L619.7,944.9 L625.6,931.9 L631.1,904.6 L635.6,935.5 L638.2,937.2 L638.2,980.7 L524.2,980.7 Z" fill="url(#gNet)"/><path d="M524.2,954.3 L529.5,952.0 L534.8,954.9 L540.7,956.7 L546.6,948.2 L551.9,954.1 L557.8,951.4 L563.7,955.3 L569.6,957.3 L574.5,948.2 L580.2,953.8 L590.8,953.8 L597.3,956.9 L603.2,949.0 L608.5,954.1 L619.7,954.1 L625.6,957.3 L631.1,948.2 L638.2,954.5 L638.2,980.7 L524.2,980.7 Z" fill="url(#gOut)"/><path d="M524.2,954.3 L529.5,952.0 L534.8,954.9 L540.7,956.7 L546.6,948.2 L551.9,954.1 L557.8,951.4 L563.7,955.3 L569.6,957.3 L574.5,948.2 L580.2,953.8 L590.8,953.8 L597.3,956.9 L603.2,949.0 L608.5,954.1 L619.7,954.1 L625.6,957.3 L631.1,948.2 L638.2,954.5" fill="none" stroke="#4646d8" stroke-width="1.3"/><line x1="300.2" y1="872" x2="300.2" y2="981.7" stroke="#d2dade" stroke-width="1.6"/><line x1="300" y1="981.2" x2="641.5" y2="981.2" stroke="#d2dade" stroke-width="1"/><path d="M297.5,872 L300.5,869 L303.5,872 Z" fill="#d2dade"/><path d="M641.5,978.2 L644.5,981.2 L641.5,984.2 Z" fill="#d2dade"/><text x="294.5" y="877.2" font-size="6.2" fill="#505050" text-anchor="end">1.2 Mbps</text><text x="294.5" y="894.8" font-size="6.2" fill="#505050" text-anchor="end">1.0 Mbps</text><text x="294.5" y="912.4" font-size="6.2" fill="#505050" text-anchor="end">0.8 Mbps</text><text x="294.5" y="930.1" font-size="6.2" fill="#505050" text-anchor="end">0.6 Mbps</text><text x="294.5" y="947.7" font-size="6.2" fill="#505050" text-anchor="end">0.4 Mbps</text><text x="294.5" y="965.3" font-size="6.2" fill="#505050" text-anchor="end">0.2 Mbps</text><text x="294.5" y="982.9" font-size="6.2" fill="#505050" text-anchor="end">0 Mbps</text><text transform="translate(302.0,983.7) rotate(-90)" font-size="5.6" fill="#e03030" text-anchor="end" letter-spacing="0.35">11-06 05:25</text><text transform="translate(640.5,983.7) rotate(-90)" font-size="5.6" fill="#e03030" text-anchor="end" letter-spacing="0.35">11-06 06:25</text><text transform="translate(317.0,983.7) rotate(-90)" font-size="5.6" fill="#3a3a3a" text-anchor="end" letter-spacing="0">05:28</text><text transform="translate(328.3,983.7) rotate(-90)" font-size="5.6" fill="#3a3a3a" text-anchor="end" letter-spacing="0">05:30</text><text transform="translate(339.6,983.7) rotate(-90)" font-size="5.6" fill="#3a3a3a" text-anchor="end" letter-spacing="0">05:32</text><text transform="translate(350.9,983.7) rotate(-90)" font-size="5.6" fill="#3a3a3a" text-anchor="end" letter-spacing="0">05:34</text><text transform="translate(362.1,983.7) rotate(-90)" font-size="5.6" fill="#3a3a3a" text-anchor="end" letter-spacing="0">05:36</text><text transform="translate(373.4,983.7) rotate(-90)" font-size="5.6" fill="#3a3a3a" text-anchor="end" letter-spacing="0">05:38</text><text transform="translate(384.7,983.7) rotate(-90)" font-size="5.6" fill="#3a3a3a" text-anchor="end" letter-spacing="0">05:40</text><text transform="translate(396.0,983.7) rotate(-90)" font-size="5.6" fill="#3a3a3a" text-anchor="end" letter-spacing="0">05:42</text><text transform="translate(407.3,983.7) rotate(-90)" font-size="5.6" fill="#3a3a3a" text-anchor="end" letter-spacing="0">05:44</text><text transform="translate(418.6,983.7) rotate(-90)" font-size="5.6" fill="#3a3a3a" text-anchor="end" letter-spacing="0">05:46</text><text transform="translate(429.8,983.7) rotate(-90)" font-size="5.6" fill="#3a3a3a" text-anchor="end" letter-spacing="0">05:48</text><text transform="translate(441.1,983.7) rotate(-90)" font-size="5.6" fill="#3a3a3a" text-anchor="end" letter-spacing="0">05:50</text><text transform="translate(452.4,983.7) rotate(-90)" font-size="5.6" fill="#3a3a3a" text-anchor="end" letter-spacing="0">05:52</text><text transform="translate(463.7,983.7) rotate(-90)" font-size="5.6" fill="#3a3a3a" text-anchor="end" letter-spacing="0">05:54</text><text transform="translate(475.0,983.7) rotate(-90)" font-size="5.6" fill="#3a3a3a" text-anchor="end" letter-spacing="0">05:56</text><text transform="translate(486.3,983.7) rotate(-90)" font-size="5.6" fill="#3a3a3a" text-anchor="end" letter-spacing="0">05:58</text><text transform="translate(497.5,983.7) rotate(-90)" font-size="5.6" fill="#e03030" text-anchor="end" letter-spacing="0">06:00</text><text transform="translate(508.8,983.7) rotate(-90)" font-size="5.6" fill="#3a3a3a" text-anchor="end" letter-spacing="0">06:02</text><text transform="translate(520.1,983.7) rotate(-90)" font-size="5.6" fill="#3a3a3a" text-anchor="end" letter-spacing="0">06:04</text><text transform="translate(531.4,983.7) rotate(-90)" font-size="5.6" fill="#3a3a3a" text-anchor="end" letter-spacing="0">06:06</text><text transform="translate(542.7,983.7) rotate(-90)" font-size="5.6" fill="#3a3a3a" text-anchor="end" letter-spacing="0">06:08</text><text transform="translate(554.0,983.7) rotate(-90)" font-size="5.6" fill="#3a3a3a" text-anchor="end" letter-spacing="0">06:10</text><text transform="translate(565.2,983.7) rotate(-90)" font-size="5.6" fill="#3a3a3a" text-anchor="end" letter-spacing="0">06:12</text><text transform="translate(576.5,983.7) rotate(-90)" font-size="5.6" fill="#3a3a3a" text-anchor="end" letter-spacing="0">06:14</text><text transform="translate(587.8,983.7) rotate(-90)" font-size="5.6" fill="#3a3a3a" text-anchor="end" letter-spacing="0">06:16</text><text transform="translate(599.1,983.7) rotate(-90)" font-size="5.6" fill="#3a3a3a" text-anchor="end" letter-spacing="0">06:18</text><text transform="translate(610.4,983.7) rotate(-90)" font-size="5.6" fill="#3a3a3a" text-anchor="end" letter-spacing="0">06:20</text><text transform="translate(621.7,983.7) rotate(-90)" font-size="5.6" fill="#3a3a3a" text-anchor="end" letter-spacing="0">06:22</text><text transform="translate(632.9,983.7) rotate(-90)" font-size="5.6" fill="#3a3a3a" text-anchor="end" letter-spacing="0">06:24</text><text x="856.8" y="869" font-size="8.7" fill="#3a3a3a" text-anchor="middle">vistep.ru: Network traffic on ens19 (1ч)</text><rect x="702" y="875" width="339.5" height="105.39999999999998" fill="#e6e6e6"/><line x1="702" y1="875.5" x2="1041.5" y2="875.5" stroke="#d0d7dc" stroke-width="1" stroke-dasharray="2 1"/><line x1="702" y1="890.6" x2="1041.5" y2="890.6" stroke="#d0d7dc" stroke-width="1" stroke-dasharray="2 1"/><line x1="702" y1="905.6" x2="1041.5" y2="905.6" stroke="#d0d7dc" stroke-width="1" stroke-dasharray="2 1"/><line x1="702" y1="920.7" x2="1041.5" y2="920.7" stroke="#d0d7dc" stroke-width="1" stroke-dasharray="2 1"/><line x1="702" y1="935.8" x2="1041.5" y2="935.8" stroke="#d0d7dc" stroke-width="1" stroke-dasharray="2 1"/><line x1="702" y1="950.9" x2="1041.5" y2="950.9" stroke="#d0d7dc" stroke-width="1" stroke-dasharray="2 1"/><line x1="702" y1="965.9" x2="1041.5" y2="965.9" stroke="#d0d7dc" stroke-width="1" stroke-dasharray="2 1"/><line x1="702" y1="883.0" x2="1041.5" y2="883.0" stroke="#d0d7dc" stroke-width="1" stroke-dasharray="1.5 2"/><line x1="702" y1="898.1" x2="1041.5" y2="898.1" stroke="#d0d7dc" stroke-width="1" stroke-dasharray="1.5 2"/><line x1="702" y1="913.1" x2="1041.5" y2="913.1" stroke="#d0d7dc" stroke-width="1" stroke-dasharray="1.5 2"/><line x1="702" y1="928.2" x2="1041.5" y2="928.2" stroke="#d0d7dc" stroke-width="1" stroke-dasharray="1.5 2"/><line x1="702" y1="943.3" x2="1041.5" y2="943.3" stroke="#d0d7dc" stroke-width="1" stroke-dasharray="1.5 2"/><line x1="702" y1="958.4" x2="1041.5" y2="958.4" stroke="#d0d7dc" stroke-width="1" stroke-dasharray="1.5 2"/><line x1="702" y1="973.4" x2="1041.5" y2="973.4" stroke="#d0d7dc" stroke-width="1" stroke-dasharray="1.5 2"/><line x1="717.6" y1="875" x2="717.6" y2="980.4" stroke="#d0d7dc" stroke-width="1" stroke-dasharray="1.5 1"/><line x1="728.9" y1="875" x2="728.9" y2="980.4" stroke="#d0d7dc" stroke-width="1" stroke-dasharray="1.5 1"/><line x1="740.2" y1="875" x2="740.2" y2="980.4" stroke="#d0d7dc" stroke-width="1" stroke-dasharray="1.5 1"/><line x1="751.5" y1="875" x2="751.5" y2="980.4" stroke="#d0d7dc" stroke-width="1" stroke-dasharray="1.5 1"/><line x1="762.8" y1="875" x2="762.8" y2="980.4" stroke="#d0d7dc" stroke-width="1" stroke-dasharray="1.5 1"/><line x1="774.1" y1="875" x2="774.1" y2="980.4" stroke="#d0d7dc" stroke-width="1" stroke-dasharray="1.5 1"/><line x1="785.5" y1="875" x2="785.5" y2="980.4" stroke="#d0d7dc" stroke-width="1" stroke-dasharray="1.5 1"/><line x1="796.8" y1="875" x2="796.8" y2="980.4" stroke="#d0d7dc" stroke-width="1" stroke-dasharray="1.5 1"/><line x1="808.1" y1="875" x2="808.1" y2="980.4" stroke="#d0d7dc" stroke-width="1" stroke-dasharray="1.5 1"/><line x1="819.4" y1="875" x2="819.4" y2="980.4" stroke="#d0d7dc" stroke-width="1" stroke-dasharray="1.5 1"/><line x1="830.7" y1="875" x2="830.7" y2="980.4" stroke="#d0d7dc" stroke-width="1" stroke-dasharray="1.5 1"/><line x1="842.0" y1="875" x2="842.0" y2="980.4" stroke="#d0d7dc" stroke-width="1" stroke-dasharray="1.5 1"/><line x1="853.4" y1="875" x2="853.4" y2="980.4" stroke="#d0d7dc" stroke-width="1" stroke-dasharray="1.5 1"/><line x1="864.7" y1="875" x2="864.7" y2="980.4" stroke="#d0d7dc" stroke-width="1" stroke-dasharray="1.5 1"/><line x1="876.0" y1="875" x2="876.0" y2="980.4" stroke="#d0d7dc" stroke-width="1" stroke-dasharray="1.5 1"/><line x1="887.3" y1="875" x2="887.3" y2="980.4" stroke="#d0d7dc" stroke-width="1" stroke-dasharray="1.5 1"/><line x1="898.6" y1="875" x2="898.6" y2="980.4" stroke="#d0d7dc" stroke-width="1" stroke-dasharray="1.5 1"/><line x1="909.9" y1="875" x2="909.9" y2="980.4" stroke="#d0d7dc" stroke-width="1" stroke-dasharray="1.5 1"/><line x1="921.3" y1="875" x2="921.3" y2="980.4" stroke="#d0d7dc" stroke-width="1" stroke-dasharray="1.5 1"/><line x1="932.6" y1="875" x2="932.6" y2="980.4" stroke="#d0d7dc" stroke-width="1" stroke-dasharray="1.5 1"/><line x1="943.9" y1="875" x2="943.9" y2="980.4" stroke="#d0d7dc" stroke-width="1" stroke-dasharray="1.5 1"/><line x1="955.2" y1="875" x2="955.2" y2="980.4" stroke="#d0d7dc" stroke-width="1" stroke-dasharray="1.5 1"/><line x1="966.5" y1="875" x2="966.5" y2="980.4" stroke="#d0d7dc" stroke-width="1" stroke-dasharray="1.5 1"/><line x1="977.8" y1="875" x2="977.8" y2="980.4" stroke="#d0d7dc" stroke-width="1" stroke-dasharray="1.5 1"/><line x1="989.2" y1="875" x2="989.2" y2="980.4" stroke="#d0d7dc" stroke-width="1" stroke-dasharray="1.5 1"/><line x1="1000.5" y1="875" x2="1000.5" y2="980.4" stroke="#d0d7dc" stroke-width="1" stroke-dasharray="1.5 1"/><line x1="1011.8" y1="875" x2="1011.8" y2="980.4" stroke="#d0d7dc" stroke-width="1" stroke-dasharray="1.5 1"/><line x1="1023.1" y1="875" x2="1023.1" y2="980.4" stroke="#d0d7dc" stroke-width="1" stroke-dasharray="1.5 1"/><line x1="1034.4" y1="875" x2="1034.4" y2="980.4" stroke="#d0d7dc" stroke-width="1" stroke-dasharray="1.5 1"/><path d="M927.1,926.6 L931.8,901.9 L937.7,924.3 L943.0,906.6 L949.5,901.9 L954.8,948.4 L966.0,913.7 L971.6,881.8 L977.6,942.0 L982.9,904.2 L989.6,909.5 L994.3,914.2 L1000.2,917.8 L1005.5,916.6 L1011.4,910.7 L1022.6,917.2 L1028.2,890.7 L1033.6,936.7 L1039.7,888.1 L1040.9,888.3 L1040.9,980.4 L927.1,980.4 Z" fill="url(#gNet2)"/><line x1="702.2" y1="872" x2="702.2" y2="981.4" stroke="#d2dade" stroke-width="1.6"/><line x1="702" y1="980.9" x2="1044.5" y2="980.9" stroke="#d2dade" stroke-width="1"/><path d="M699.5,872 L702.5,869 L705.5,872 Z" fill="#d2dade"/><path d="M1044.5,977.9 L1047.5,980.9 L1044.5,983.9 Z" fill="#d2dade"/><text x="698" y="877.2" font-size="6.2" fill="#505050" text-anchor="end">70 Mbps</text><text x="698" y="892.3" font-size="6.2" fill="#505050" text-anchor="end">60 Mbps</text><text x="698" y="907.3" font-size="6.2" fill="#505050" text-anchor="end">50 Mbps</text><text x="698" y="922.4" font-size="6.2" fill="#505050" text-anchor="end">40 Mbps</text><text x="698" y="937.5" font-size="6.2" fill="#505050" text-anchor="end">30 Mbps</text><text x="698" y="952.6" font-size="6.2" fill="#505050" text-anchor="end">20 Mbps</text><text x="698" y="967.6" font-size="6.2" fill="#505050" text-anchor="end">10 Mbps</text><text transform="translate(704.0,983.4) rotate(-90)" font-size="5.6" fill="#e03030" text-anchor="end" letter-spacing="0.35">11-06 05:25</text><text transform="translate(1043.5,983.4) rotate(-90)" font-size="5.6" fill="#e03030" text-anchor="end" letter-spacing="0.35">11-06 06:25</text><text transform="translate(719.1,983.4) rotate(-90)" font-size="5.6" fill="#3a3a3a" text-anchor="end" letter-spacing="0">05:28</text><text transform="translate(730.4,983.4) rotate(-90)" font-size="5.6" fill="#3a3a3a" text-anchor="end" letter-spacing="0">05:30</text><text transform="translate(741.7,983.4) rotate(-90)" font-size="5.6" fill="#3a3a3a" text-anchor="end" letter-spacing="0">05:32</text><text transform="translate(753.0,983.4) rotate(-90)" font-size="5.6" fill="#3a3a3a" text-anchor="end" letter-spacing="0">05:34</text><text transform="translate(764.3,983.4) rotate(-90)" font-size="5.6" fill="#3a3a3a" text-anchor="end" letter-spacing="0">05:36</text><text transform="translate(775.6,983.4) rotate(-90)" font-size="5.6" fill="#3a3a3a" text-anchor="end" letter-spacing="0">05:38</text><text transform="translate(787.0,983.4) rotate(-90)" font-size="5.6" fill="#3a3a3a" text-anchor="end" letter-spacing="0">05:40</text><text transform="translate(798.3,983.4) rotate(-90)" font-size="5.6" fill="#3a3a3a" text-anchor="end" letter-spacing="0">05:42</text><text transform="translate(809.6,983.4) rotate(-90)" font-size="5.6" fill="#3a3a3a" text-anchor="end" letter-spacing="0">05:44</text><text transform="translate(820.9,983.4) rotate(-90)" font-size="5.6" fill="#3a3a3a" text-anchor="end" letter-spacing="0">05:46</text><text transform="translate(832.2,983.4) rotate(-90)" font-size="5.6" fill="#3a3a3a" text-anchor="end" letter-spacing="0">05:48</text><text transform="translate(843.5,983.4) rotate(-90)" font-size="5.6" fill="#3a3a3a" text-anchor="end" letter-spacing="0">05:50</text><text transform="translate(854.9,983.4) rotate(-90)" font-size="5.6" fill="#3a3a3a" text-anchor="end" letter-spacing="0">05:52</text><text transform="translate(866.2,983.4) rotate(-90)" font-size="5.6" fill="#3a3a3a" text-anchor="end" letter-spacing="0">05:54</text><text transform="translate(877.5,983.4) rotate(-90)" font-size="5.6" fill="#3a3a3a" text-anchor="end" letter-spacing="0">05:56</text><text transform="translate(888.8,983.4) rotate(-90)" font-size="5.6" fill="#3a3a3a" text-anchor="end" letter-spacing="0">05:58</text><text transform="translate(900.1,983.4) rotate(-90)" font-size="5.6" fill="#e03030" text-anchor="end" letter-spacing="0">06:00</text><text transform="translate(911.4,983.4) rotate(-90)" font-size="5.6" fill="#3a3a3a" text-anchor="end" letter-spacing="0">06:02</text><text transform="translate(922.8,983.4) rotate(-90)" font-size="5.6" fill="#3a3a3a" text-anchor="end" letter-spacing="0">06:04</text><text transform="translate(934.1,983.4) rotate(-90)" font-size="5.6" fill="#3a3a3a" text-anchor="end" letter-spacing="0">06:06</text><text transform="translate(945.4,983.4) rotate(-90)" font-size="5.6" fill="#3a3a3a" text-anchor="end" letter-spacing="0">06:08</text><text transform="translate(956.7,983.4) rotate(-90)" font-size="5.6" fill="#3a3a3a" text-anchor="end" letter-spacing="0">06:10</text><text transform="translate(968.0,983.4) rotate(-90)" font-size="5.6" fill="#3a3a3a" text-anchor="end" letter-spacing="0">06:12</text><text transform="translate(979.3,983.4) rotate(-90)" font-size="5.6" fill="#3a3a3a" text-anchor="end" letter-spacing="0">06:14</text><text transform="translate(990.7,983.4) rotate(-90)" font-size="5.6" fill="#3a3a3a" text-anchor="end" letter-spacing="0">06:16</text><text transform="translate(1002.0,983.4) rotate(-90)" font-size="5.6" fill="#3a3a3a" text-anchor="end" letter-spacing="0">06:18</text><text transform="translate(1013.3,983.4) rotate(-90)" font-size="5.6" fill="#3a3a3a" text-anchor="end" letter-spacing="0">06:20</text><text transform="translate(1024.6,983.4) rotate(-90)" font-size="5.6" fill="#3a3a3a" text-anchor="end" letter-spacing="0">06:22</text><text transform="translate(1035.9,983.4) rotate(-90)" font-size="5.6" fill="#3a3a3a" text-anchor="end" letter-spacing="0">06:24</text></svg>
</div>
<div class="a" style="left:0;top:0;width:1920px;height:975px;border:1px solid rgba(255,255,255,0.25);border-top:none;border-radius:0 0 10px 10px"></div>
</body></html>
